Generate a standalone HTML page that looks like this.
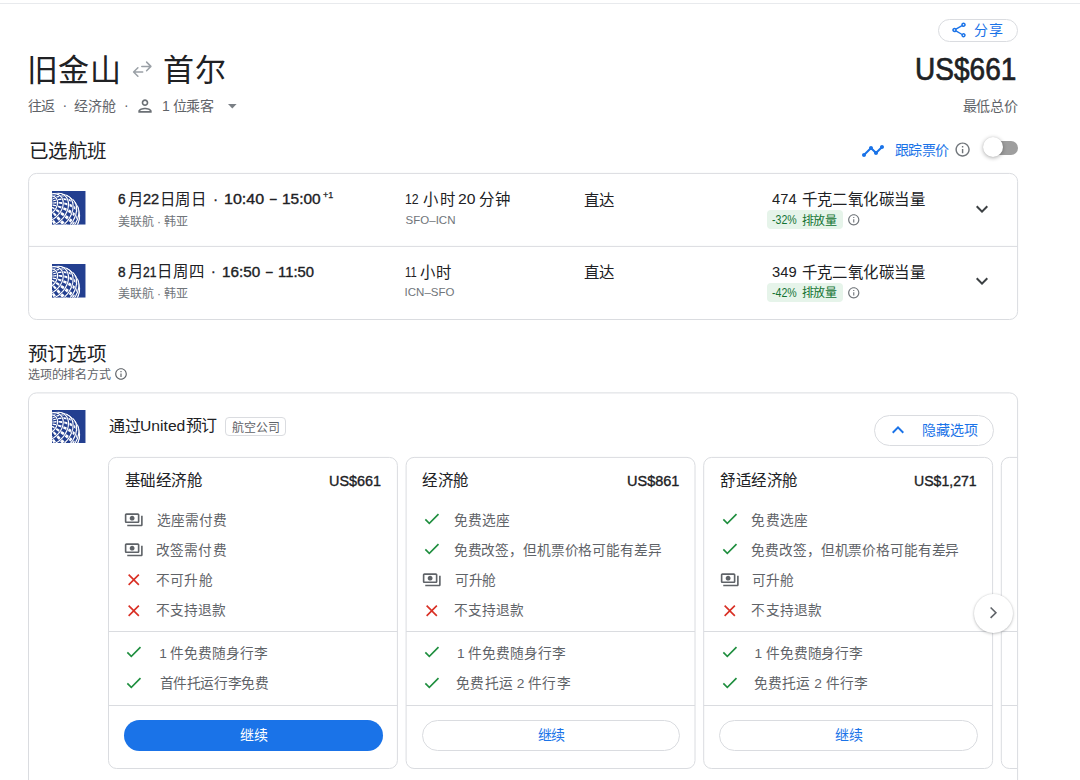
<!DOCTYPE html>
<html lang="zh-CN">
<head>
<meta charset="utf-8">
<title>Flights</title>
<style>
html,body{margin:0;padding:0;background:#fff;}
body{width:1080px;height:780px;position:relative;overflow:hidden;font-family:"Liberation Sans",sans-serif;color:#202124;}
.a{position:absolute;white-space:nowrap;line-height:1;}
svg{position:absolute;display:block;overflow:visible;}
.bx{position:absolute;box-sizing:border-box;}
.card{position:absolute;box-sizing:border-box;border:1px solid #dadce0;border-radius:8px;background:#fff;}
.hr{position:absolute;height:1px;background:#dadce0;}
</style>
</head>
<body>
<svg width="0" height="0" style="left:0;top:0"><defs><clipPath id="ucl"><circle cx="5.2" cy="24.9" r="23.3"/></clipPath><clipPath id="usq"><rect width="34" height="34"/></clipPath></defs></svg>
<div class="a" style="left:0;top:3px;width:1080px;height:1px;background:#e8eaed;"></div>
<div class="bx" style="left:938px;top:19px;width:80px;height:23px;border:1px solid #dadce0;border-radius:12px;"></div>
<svg style="left:950px;top:21px" width="18" height="18" viewBox="0 0 24 24"><path fill="#1a73e8" d="M18 16.080c-.760 0-1.440.3-1.960.770L8.910 12.700c.050-.230.090-.460.090-.7s-.040-.470-.090-.7l7.050-4.110c.540.5 1.250.810 2.040.810 1.660 0 3-1.340 3-3s-1.340-3-3-3-3 1.340-3 3c0 .240.040.470.090.7L8.040 9.810C7.500 9.310 6.790 9 6 9c-1.660 0-3 1.340-3 3s1.340 3 3 3c.790 0 1.500-.310 2.040-.810l7.120 4.160c-.050.210-.080.430-.080.650 0 1.610 1.310 2.920 2.920 2.920s2.920-1.310 2.920-2.920-1.310-2.920-2.920-2.920zM18 4c.550 0 1 .450 1 1s-.450 1-1 1-1-.450-1-1 .450-1 1-1zM6 13c-.550 0-1-.450-1-1s.450-1 1-1 1 .450 1 1-.450 1-1 1zm12 7.020c-.550 0-1-.450-1-1s.450-1 1-1 1 .450 1 1-.450 1-1 1z"/></svg>
<svg style="left:131px;top:59px" width="22" height="20" viewBox="0 0 22 20"><g fill="none" stroke="#9aa0a6" stroke-width="1.500" stroke-linecap="round" stroke-linejoin="round"><path d="M10.800 7.400H19.800M15.600 3.100l4.300 4.300-4.300 4.300"/><path d="M11.700 13H2.700M6.900 8.700l-4.300 4.300 4.300 4.300"/></g></svg>
<svg style="left:134.600px;top:96.100px" width="20" height="20" viewBox="0 0 24 24"><path fill="#6b7075" d="M12 6c1.100 0 2 .9 2 2s-.9 2-2 2-2-.9-2-2 .9-2 2-2m0 10c2.700 0 5.800 1.290 6 2H6c.230-.720 3.310-2 6-2m0-12C9.790 4 8 5.790 8 8s1.790 4 4 4 4-1.790 4-4-1.790-4-4-4zm0 10c-2.670 0-8 1.340-8 4v2h16v-2c0-2.660-5.330-4-8-4z"/></svg>
<svg style="left:227.500px;top:104px" width="9" height="5" viewBox="0 0 9 5"><path fill="#7a7f85" d="M0 0h8.600L4.300 4.500z"/></svg>
<svg style="left:861.300px;top:138.500px" width="24" height="24" viewBox="0 0 24 24"><path fill="#1a73e8" d="M23 8c0 1.100-.9 2-2 2-.180 0-.350-.020-.510-.070l-3.560 3.550c.050.160.070.340.070.520 0 1.100-.9 2-2 2s-2-.9-2-2c0-.180.020-.360.070-.520l-2.550-2.550c-.160.050-.340.070-.520.070s-.360-.020-.520-.070l-4.550 4.560c.050.160.070.330.070.510 0 1.100-.9 2-2 2s-2-.9-2-2 .9-2 2-2c.180 0 .350.020.510.070l4.560-4.550C8.020 9.360 8 9.180 8 9c0-1.100.9-2 2-2s2 .9 2 2c0 .180-.020.360-.070.520l2.550 2.550c.160-.050.340-.070.520-.070s.360.020.520.070l3.550-3.560C19.020 8.350 19 8.180 19 8c0-1.100.9-2 2-2s2 .9 2 2z"/></svg>
<svg style="left:953.7px;top:141.4px" width="17.2" height="17.2" viewBox="0 0 24 24"><path fill="#70757a" d="M11 7h2v2h-2zm0 4h2v6h-2zm1-9C6.480 2 2 6.480 2 12s4.480 10 10 10 10-4.480 10-10S17.520 2 12 2zm0 18c-4.410 0-8-3.590-8-8s3.590-8 8-8 8 3.590 8 8-3.590 8-8 8z"/></svg>
<div class="bx" style="left:985px;top:141px;width:33px;height:13.500px;border-radius:7px;background:#9e9e9e;"></div>
<div class="bx" style="left:982.500px;top:137.100px;width:20.400px;height:20.400px;border-radius:10.200px;background:#fff;box-shadow:0 1px 4px rgba(0,0,0,.32),0 0 1px rgba(0,0,0,.12);"></div>
<svg style="left:0;top:0" width="1080" height="780" viewBox="0 0 1080 780"><defs><clipPath id="fclip"><rect x="0" y="0" width="1017.100" height="780"/></clipPath></defs><g fill="none" stroke="#dadce0" stroke-width="1"><rect x="28.600" y="173.400" width="989" height="146.100" rx="8"/><path d="M28.600 246.400H1017.600"/><rect x="28.500" y="392.900" width="989.100" height="430" rx="8"/><g clip-path="url(#fclip)"><rect x="108.5" y="457.400" width="288.900" height="311.100" rx="8"/><path d="M108.5 631.500h288.900M108.5 705.500h288.900"/><rect x="406.1" y="457.400" width="288.900" height="311.100" rx="8"/><path d="M406.1 631.500h288.900M406.1 705.500h288.900"/><rect x="703.7" y="457.400" width="288.900" height="311.100" rx="8"/><path d="M703.7 631.500h288.900M703.7 705.500h288.900"/><rect x="1001.3" y="457.400" width="288.900" height="311.100" rx="8"/><path d="M1001.3 631.500h288.900M1001.3 705.500h288.900"/></g></g></svg>
<svg style="left:52.3px;top:191.3px;overflow:hidden" width="33.700" height="33.700" viewBox="0 0 34 34"><g clip-path="url(#usq)"><rect width="34" height="34" fill="#233f90"/><g clip-path="url(#ucl)"><path fill="#fff" d="M1.6 2.3L1.0 2.4L0.5 2.6L-0.1 2.8L-0.6 3.1L-1.1 3.5L-1.6 3.8L-2.1 4.3L-2.5 4.8L-3.0 5.3L-3.4 5.9L-3.8 6.5L-4.2 7.2L-3.2 7.1L-2.7 6.4L-2.1 5.8L-1.6 5.2L-1.0 4.7L-0.4 4.2L0.2 3.7L0.8 3.3L1.4 3.0L2.0 2.7L2.6 2.4L3.3 2.2L3.9 2.1ZM9.5 2.4L8.8 2.3L8.1 2.3L7.3 2.3L6.6 2.4L5.9 2.5L5.1 2.7L4.4 2.9L3.6 3.2L2.9 3.5L2.2 3.9L1.4 4.3L0.7 4.8L0.0 5.4L-0.7 5.9L-1.3 6.6L-2.0 7.2L-2.6 8.0L-3.3 8.7L-3.9 9.5L-3.3 9.7L-2.6 8.9L-1.9 8.2L-1.1 7.5L-0.3 6.9L0.4 6.3L1.2 5.7L2.0 5.2L2.9 4.8L3.7 4.4L4.5 4.0L5.3 3.7L6.1 3.4L7.0 3.2L7.8 3.1L8.6 3.0L9.4 2.9L10.2 2.9L11.0 3.0L11.7 3.1ZM18.5 6.3L17.9 5.9L17.2 5.5L16.5 5.2L15.7 4.9L14.9 4.6L14.1 4.4L13.3 4.3L12.5 4.2L11.6 4.2L10.7 4.2L9.8 4.2L8.9 4.3L8.0 4.5L7.1 4.7L6.2 4.9L5.3 5.3L4.4 5.6L3.4 6.0L2.5 6.4L1.6 6.9L0.7 7.5L-0.2 8.0L-1.1 8.6L-1.9 9.3L-2.8 10.0L-3.6 10.7L-3.3 11.0L-2.4 10.3L-1.5 9.7L-0.5 9.2L0.4 8.6L1.4 8.1L2.4 7.7L3.4 7.2L4.4 6.9L5.4 6.5L6.4 6.3L7.4 6.0L8.3 5.8L9.3 5.7L10.3 5.6L11.2 5.5L12.2 5.5L13.1 5.5L14.0 5.6L14.9 5.7L15.8 5.9L16.6 6.1L17.4 6.4L18.2 6.7L18.9 7.1L19.6 7.5L20.3 7.9ZM25.6 14.5L25.2 13.8L24.8 13.2L24.3 12.5L23.8 11.9L23.2 11.4L22.6 10.9L22.0 10.4L21.3 9.9L20.5 9.5L19.8 9.1L19.0 8.8L18.1 8.4L17.3 8.2L16.4 7.9L15.5 7.8L14.5 7.6L13.5 7.5L12.6 7.4L11.5 7.4L10.5 7.4L9.5 7.5L8.4 7.6L7.4 7.8L6.3 8.0L5.3 8.2L4.2 8.5L3.1 8.8L2.1 9.1L1.0 9.5L0.0 9.9L-1.0 10.4L-2.0 10.9L-3.0 11.4L-4.0 12.0L-3.9 12.2L-2.9 11.8L-1.8 11.4L-0.8 11.0L0.3 10.6L1.4 10.3L2.5 10.1L3.6 9.8L4.7 9.6L5.8 9.4L6.9 9.3L7.9 9.2L9.0 9.1L10.1 9.1L11.2 9.1L12.2 9.2L13.3 9.3L14.3 9.4L15.3 9.6L16.3 9.8L17.2 10.0L18.1 10.3L19.0 10.6L19.8 11.0L20.7 11.4L21.4 11.8L22.2 12.2L22.9 12.7L23.5 13.2L24.1 13.7L24.7 14.3L25.2 14.9L25.7 15.5L26.1 16.1L26.5 16.8ZM28.0 23.2L27.9 22.5L27.8 21.8L27.6 21.2L27.3 20.5L27.0 19.9L26.6 19.3L26.2 18.7L25.8 18.1L25.2 17.5L24.7 16.9L24.1 16.4L23.4 15.9L22.7 15.4L22.0 14.9L21.2 14.4L20.4 14.0L19.5 13.6L18.6 13.2L17.7 12.9L16.7 12.6L15.7 12.3L14.7 12.0L13.7 11.8L12.6 11.6L11.6 11.4L10.5 11.3L9.4 11.2L8.3 11.2L7.2 11.1L6.0 11.1L4.9 11.2L3.8 11.2L2.7 11.3L1.6 11.5L0.5 11.6L-0.6 11.8L-1.7 12.1L-2.8 12.3L-3.8 12.6L-3.8 13.0L-2.8 12.8L-1.7 12.7L-0.7 12.6L0.4 12.5L1.5 12.5L2.7 12.5L3.8 12.5L4.9 12.5L6.0 12.6L7.1 12.7L8.2 12.9L9.3 13.0L10.4 13.2L11.5 13.5L12.6 13.7L13.6 14.0L14.7 14.3L15.7 14.6L16.7 15.0L17.6 15.4L18.6 15.8L19.4 16.2L20.3 16.7L21.1 17.1L21.9 17.6L22.7 18.1L23.4 18.6L24.0 19.2L24.6 19.7L25.2 20.3L25.7 20.9L26.2 21.4L26.6 22.0L27.0 22.6L27.3 23.2L27.5 23.8L27.7 24.4L27.9 25.1L28.0 25.7ZM27.3 30.9L27.4 30.4L27.5 29.9L27.5 29.4L27.4 28.9L27.3 28.3L27.1 27.8L26.9 27.2L26.6 26.7L26.3 26.1L25.9 25.5L25.5 25.0L25.0 24.4L24.5 23.9L24.0 23.3L23.4 22.7L22.7 22.2L22.0 21.6L21.3 21.1L20.5 20.6L19.7 20.0L18.8 19.5L17.9 19.0L17.0 18.6L16.1 18.1L15.1 17.7L14.1 17.2L13.1 16.8L12.1 16.4L11.1 16.0L10.0 15.7L8.9 15.4L7.8 15.1L6.7 14.8L5.7 14.5L4.6 14.3L3.5 14.1L2.4 13.9L1.3 13.7L0.2 13.6L-0.8 13.5L-1.9 13.4L-2.9 13.4L-3.9 13.4L-4.0 13.7L-3.1 13.9L-2.1 14.1L-1.1 14.3L-0.1 14.5L0.9 14.8L2.0 15.1L3.0 15.4L4.1 15.7L5.1 16.1L6.2 16.5L7.2 16.9L8.3 17.3L9.3 17.7L10.3 18.2L11.3 18.6L12.3 19.1L13.3 19.6L14.3 20.1L15.2 20.7L16.1 21.2L17.0 21.7L17.9 22.3L18.7 22.9L19.5 23.4L20.3 24.0L21.0 24.5L21.7 25.1L22.3 25.7L23.0 26.2L23.5 26.8L24.0 27.4L24.5 27.9L24.9 28.5L25.3 29.0L25.7 29.5L25.9 30.0L26.2 30.5L26.4 31.0L26.5 31.5L26.6 32.0L26.6 32.4L26.6 32.8L26.5 33.2ZM25.0 36.3L25.1 36.0L25.1 35.7L25.1 35.4L25.0 35.1L24.9 34.7L24.7 34.3L24.5 33.9L24.2 33.4L23.9 33.0L23.6 32.5L23.2 32.0L22.7 31.4L22.3 30.9L21.7 30.4L21.2 29.8L20.6 29.2L19.9 28.6L19.3 28.0L18.5 27.4L17.8 26.8L17.0 26.2L16.2 25.6L15.4 25.0L14.5 24.4L13.7 23.8L12.8 23.1L11.9 22.5L10.9 21.9L10.0 21.3L9.0 20.7L8.1 20.2L7.1 19.6L6.1 19.0L5.2 18.5L4.2 18.0L3.2 17.5L2.2 17.0L1.3 16.5L0.3 16.1L-0.6 15.6L-1.6 15.2L-2.5 14.8L-3.4 14.5L-3.7 15.0L-2.9 15.4L-2.0 16.0L-1.2 16.5L-0.4 17.1L0.5 17.6L1.4 18.2L2.3 18.8L3.2 19.5L4.1 20.1L5.0 20.8L5.9 21.4L6.8 22.1L7.7 22.8L8.6 23.4L9.5 24.1L10.3 24.8L11.2 25.5L12.1 26.2L12.9 26.9L13.7 27.5L14.5 28.2L15.3 28.9L16.0 29.5L16.7 30.2L17.4 30.8L18.1 31.4L18.7 32.0L19.3 32.6L19.9 33.1L20.4 33.7L20.9 34.2L21.4 34.7L21.8 35.2L22.1 35.6L22.5 36.1L22.8 36.5L23.0 36.8L23.2 37.2L23.4 37.5L23.5 37.8L23.6 38.0L23.6 38.2L23.6 38.4ZM18.2 37.4L17.7 36.8L17.2 36.3L16.6 35.7L16.0 35.2L15.4 34.5L14.8 33.9L14.1 33.2L13.4 32.6L12.7 31.9L12.0 31.1L11.2 30.4L10.5 29.7L9.7 28.9L8.9 28.2L8.1 27.4L7.3 26.6L6.5 25.8L5.7 25.0L4.9 24.2L4.1 23.5L3.3 22.7L2.5 21.9L1.7 21.1L1.0 20.4L0.2 19.6L-0.6 18.9L-1.3 18.2L-2.0 17.5L-2.8 16.8L-3.5 16.1L-4.0 16.6L-3.4 17.4L-2.8 18.2L-2.2 19.0L-1.6 19.8L-0.9 20.7L-0.3 21.5L0.4 22.4L1.1 23.2L1.8 24.1L2.5 25.0L3.2 25.8L3.9 26.7L4.7 27.6L5.4 28.4L6.1 29.3L6.8 30.1L7.5 30.9L8.2 31.7L8.9 32.5L9.6 33.3L10.3 34.1L11.0 34.8L11.6 35.5L12.3 36.2L12.9 36.8L13.5 37.5L14.1 38.1L14.7 38.6L15.2 39.2L15.7 39.6ZM7.8 37.1L7.2 36.3L6.5 35.6L5.9 34.7L5.3 33.9L4.6 33.0L4.0 32.1L3.4 31.2L2.8 30.3L2.1 29.4L1.5 28.4L0.9 27.5L0.3 26.5L-0.2 25.6L-0.8 24.6L-1.4 23.7L-1.9 22.7L-2.4 21.7L-2.9 20.8L-3.4 19.9L-4.4 20.4L-4.1 21.4L-3.7 22.5L-3.3 23.5L-2.9 24.5L-2.5 25.5L-2.0 26.6L-1.5 27.6L-1.1 28.6L-0.6 29.6L-0.0 30.6L0.5 31.6L1.0 32.5L1.6 33.5L2.1 34.4L2.7 35.3L3.3 36.2L3.8 37.0L4.4 37.9L5.0 38.6ZM-0.0 37.5L-0.5 36.6L-1.0 35.6L-1.5 34.7L-1.9 33.7L-2.3 32.7L-2.8 31.7L-3.2 30.6L-5.3 31.1L-5.0 32.2L-4.7 33.2L-4.3 34.2L-3.9 35.2L-3.6 36.2L-3.1 37.2L-2.7 38.1Z"/><path fill="none" stroke="#233f90" stroke-width="2.2" d="M28.1 23.8L28.1 24.7L28.0 25.5L28.0 26.4L27.8 27.3L27.7 28.2L27.4 29.1L27.2 30.1L26.8 31.0L26.5 31.9L26.1 32.8L25.6 33.7L25.1 34.6L24.6 35.5L24.0 36.3M26.0 15.2L26.3 16.0L26.6 16.9L26.8 17.7L27.0 18.6L27.1 19.5L27.1 20.4L27.2 21.4L27.1 22.3L27.0 23.3L26.9 24.3L26.7 25.3L26.4 26.3L26.1 27.3L25.8 28.3L25.4 29.3L24.9 30.3L24.4 31.3L23.9 32.3L23.3 33.3L22.7 34.3L22.0 35.2L21.3 36.1M21.2 8.5L21.8 9.1L22.3 9.8L22.8 10.5L23.2 11.2L23.6 12.0L23.9 12.8L24.2 13.7L24.4 14.6L24.6 15.5L24.7 16.4L24.8 17.4L24.8 18.3L24.8 19.3L24.7 20.3L24.5 21.3L24.3 22.4L24.1 23.4L23.8 24.4L23.4 25.5L23.0 26.5L22.6 27.6L22.0 28.6L21.5 29.6L20.9 30.6L20.2 31.6L19.6 32.5L18.8 33.5L18.1 34.4L17.3 35.3L16.4 36.1M14.4 3.9L15.1 4.3L15.8 4.7L16.5 5.2L17.1 5.7L17.7 6.2L18.3 6.8L18.8 7.5L19.3 8.2L19.7 8.9L20.1 9.6L20.4 10.4L20.7 11.2L20.9 12.1L21.1 12.9L21.2 13.8L21.2 14.8L21.2 15.7L21.2 16.7L21.1 17.6L21.0 18.6L20.8 19.6L20.5 20.6L20.2 21.6L19.9 22.6L19.5 23.6L19.1 24.6L18.6 25.6L18.0 26.5L17.5 27.5L16.8 28.5L16.2 29.4L15.5 30.3L14.7 31.2L14.0 32.0L13.2 32.9L12.3 33.7L11.5 34.4L10.6 35.2L9.7 35.9L8.8 36.5M5.8 2.0L6.7 2.1L7.5 2.2L8.3 2.3L9.0 2.5L9.7 2.8L10.5 3.1L11.1 3.4L11.8 3.8L12.4 4.2L13.0 4.7L13.5 5.2L14.0 5.7L14.5 6.3L14.9 6.9L15.3 7.5L15.6 8.2L15.9 8.9L16.1 9.6L16.3 10.4L16.5 11.2L16.6 12.0L16.6 12.8L16.6 13.7L16.6 14.5L16.5 15.4L16.4 16.3L16.2 17.2L16.0 18.1L15.7 19.0L15.4 19.9L15.1 20.8L14.7 21.6L14.2 22.5L13.8 23.4L13.2 24.3L12.7 25.1L12.1 26.0L11.5 26.8L10.8 27.6L10.1 28.3L9.4 29.1L8.6 29.8L7.9 30.5L7.1 31.2L6.3 31.8L5.4 32.4L4.6 32.9L3.7 33.5L2.8 33.9L1.9 34.4L1.1 34.8L0.2 35.1L-0.7 35.4L-1.6 35.7L-2.5 35.9M-2.6 3.5L-1.9 3.3L-1.2 3.1L-0.4 2.9L0.3 2.8L1.0 2.8L1.7 2.7L2.4 2.7L3.1 2.8L3.8 2.9L4.4 3.0L5.0 3.2L5.6 3.4L6.2 3.6L6.8 3.9L7.3 4.2L7.8 4.5L8.3 4.9L8.7 5.3L9.1 5.8L9.5 6.2L9.9 6.7L10.2 7.3L10.4 7.8L10.7 8.4L10.9 9.0L11.0 9.6L11.2 10.3L11.3 11.0L11.3 11.6L11.3 12.3L11.3 13.0L11.2 13.8L11.1 14.5L11.0 15.2L10.8 16.0L10.6 16.7L10.3 17.4L10.0 18.2L9.7 18.9L9.3 19.6L8.9 20.4L8.5 21.1L8.1 21.8L7.6 22.5L7.0 23.1L6.5 23.8L5.9 24.4L5.3 25.0L4.7 25.6L4.1 26.2L3.4 26.7L2.8 27.3L2.1 27.8L1.4 28.2L0.7 28.6L-0.1 29.0L-0.8 29.4L-1.5 29.7L-2.3 30.0M-2.4 4.9L-1.8 4.9L-1.3 4.9L-0.8 4.9L-0.3 4.9L0.1 5.0L0.6 5.1L1.1 5.2L1.5 5.3L1.9 5.5L2.3 5.7L2.7 5.9L3.1 6.2L3.4 6.4L3.7 6.7L4.0 7.1L4.3 7.4L4.5 7.8L4.8 8.2L5.0 8.6L5.1 9.0L5.3 9.4L5.4 9.9L5.5 10.3L5.6 10.8L5.6 11.3L5.6 11.8L5.6 12.3L5.5 12.8L5.5 13.4L5.3 13.9L5.2 14.4L5.1 15.0L4.9 15.5L4.7 16.0L4.4 16.6L4.2 17.1L3.9 17.6L3.6 18.1L3.2 18.6L2.9 19.1L2.5 19.6L2.1 20.1L1.7 20.5L1.3 21.0L0.8 21.4L0.4 21.8L-0.1 22.2L-0.6 22.6L-1.1 22.9L-1.6 23.3L-2.1 23.6M-2.2 8.6L-2.0 8.7L-1.7 8.9L-1.5 9.0L-1.4 9.2L-1.2 9.3L-1.0 9.5L-0.9 9.7L-0.7 9.9L-0.6 10.1L-0.5 10.3L-0.4 10.6L-0.3 10.8L-0.3 11.0L-0.2 11.3L-0.2 11.6L-0.2 11.8L-0.1 12.1L-0.2 12.4L-0.2 12.7L-0.2 13.0L-0.3 13.3L-0.4 13.6L-0.4 13.8L-0.5 14.1L-0.7 14.4L-0.8 14.7L-0.9 15.0L-1.1 15.3L-1.3 15.6L-1.4 15.9L-1.6 16.1L-1.8 16.4L-2.1 16.7"/><path fill="none" stroke="#fff" stroke-width="1.2" d="M28.1 23.8L28.1 24.7L28.0 25.5L28.0 26.4L27.8 27.3L27.7 28.2L27.4 29.1L27.2 30.1L26.8 31.0L26.5 31.9L26.1 32.8L25.6 33.7L25.1 34.6L24.6 35.5L24.0 36.3M26.0 15.2L26.3 16.0L26.6 16.9L26.8 17.7L27.0 18.6L27.1 19.5L27.1 20.4L27.2 21.4L27.1 22.3L27.0 23.3L26.9 24.3L26.7 25.3L26.4 26.3L26.1 27.3L25.8 28.3L25.4 29.3L24.9 30.3L24.4 31.3L23.9 32.3L23.3 33.3L22.7 34.3L22.0 35.2L21.3 36.1M21.2 8.5L21.8 9.1L22.3 9.8L22.8 10.5L23.2 11.2L23.6 12.0L23.9 12.8L24.2 13.7L24.4 14.6L24.6 15.5L24.7 16.4L24.8 17.4L24.8 18.3L24.8 19.3L24.7 20.3L24.5 21.3L24.3 22.4L24.1 23.4L23.8 24.4L23.4 25.5L23.0 26.5L22.6 27.6L22.0 28.6L21.5 29.6L20.9 30.6L20.2 31.6L19.6 32.5L18.8 33.5L18.1 34.4L17.3 35.3L16.4 36.1M14.4 3.9L15.1 4.3L15.8 4.7L16.5 5.2L17.1 5.7L17.7 6.2L18.3 6.8L18.8 7.5L19.3 8.2L19.7 8.9L20.1 9.6L20.4 10.4L20.7 11.2L20.9 12.1L21.1 12.9L21.2 13.8L21.2 14.8L21.2 15.7L21.2 16.7L21.1 17.6L21.0 18.6L20.8 19.6L20.5 20.6L20.2 21.6L19.9 22.6L19.5 23.6L19.1 24.6L18.6 25.6L18.0 26.5L17.5 27.5L16.8 28.5L16.2 29.4L15.5 30.3L14.7 31.2L14.0 32.0L13.2 32.9L12.3 33.7L11.5 34.4L10.6 35.2L9.7 35.9L8.8 36.5M5.8 2.0L6.7 2.1L7.5 2.2L8.3 2.3L9.0 2.5L9.7 2.8L10.5 3.1L11.1 3.4L11.8 3.8L12.4 4.2L13.0 4.7L13.5 5.2L14.0 5.7L14.5 6.3L14.9 6.9L15.3 7.5L15.6 8.2L15.9 8.9L16.1 9.6L16.3 10.4L16.5 11.2L16.6 12.0L16.6 12.8L16.6 13.7L16.6 14.5L16.5 15.4L16.4 16.3L16.2 17.2L16.0 18.1L15.7 19.0L15.4 19.9L15.1 20.8L14.7 21.6L14.2 22.5L13.8 23.4L13.2 24.3L12.7 25.1L12.1 26.0L11.5 26.8L10.8 27.6L10.1 28.3L9.4 29.1L8.6 29.8L7.9 30.5L7.1 31.2L6.3 31.8L5.4 32.4L4.6 32.9L3.7 33.5L2.8 33.9L1.9 34.4L1.1 34.8L0.2 35.1L-0.7 35.4L-1.6 35.7L-2.5 35.9M-2.6 3.5L-1.9 3.3L-1.2 3.1L-0.4 2.9L0.3 2.8L1.0 2.8L1.7 2.7L2.4 2.7L3.1 2.8L3.8 2.9L4.4 3.0L5.0 3.2L5.6 3.4L6.2 3.6L6.8 3.9L7.3 4.2L7.8 4.5L8.3 4.9L8.7 5.3L9.1 5.8L9.5 6.2L9.9 6.7L10.2 7.3L10.4 7.8L10.7 8.4L10.9 9.0L11.0 9.6L11.2 10.3L11.3 11.0L11.3 11.6L11.3 12.3L11.3 13.0L11.2 13.8L11.1 14.5L11.0 15.2L10.8 16.0L10.6 16.7L10.3 17.4L10.0 18.2L9.7 18.9L9.3 19.6L8.9 20.4L8.5 21.1L8.1 21.8L7.6 22.5L7.0 23.1L6.5 23.8L5.9 24.4L5.3 25.0L4.7 25.6L4.1 26.2L3.4 26.7L2.8 27.3L2.1 27.8L1.4 28.2L0.7 28.6L-0.1 29.0L-0.8 29.4L-1.5 29.7L-2.3 30.0M-2.4 4.9L-1.8 4.9L-1.3 4.9L-0.8 4.9L-0.3 4.9L0.1 5.0L0.6 5.1L1.1 5.2L1.5 5.3L1.9 5.5L2.3 5.7L2.7 5.9L3.1 6.2L3.4 6.4L3.7 6.7L4.0 7.1L4.3 7.4L4.5 7.8L4.8 8.2L5.0 8.6L5.1 9.0L5.3 9.4L5.4 9.9L5.5 10.3L5.6 10.8L5.6 11.3L5.6 11.8L5.6 12.3L5.5 12.8L5.5 13.4L5.3 13.9L5.2 14.4L5.1 15.0L4.9 15.5L4.7 16.0L4.4 16.6L4.2 17.1L3.9 17.6L3.6 18.1L3.2 18.6L2.9 19.1L2.5 19.6L2.1 20.1L1.7 20.5L1.3 21.0L0.8 21.4L0.4 21.8L-0.1 22.2L-0.6 22.6L-1.1 22.9L-1.6 23.3L-2.1 23.6M-2.2 8.6L-2.0 8.7L-1.7 8.9L-1.5 9.0L-1.4 9.2L-1.2 9.3L-1.0 9.5L-0.9 9.7L-0.7 9.9L-0.6 10.1L-0.5 10.3L-0.4 10.6L-0.3 10.8L-0.3 11.0L-0.2 11.3L-0.2 11.6L-0.2 11.8L-0.1 12.1L-0.2 12.4L-0.2 12.7L-0.2 13.0L-0.3 13.3L-0.4 13.6L-0.4 13.8L-0.5 14.1L-0.7 14.4L-0.8 14.7L-0.9 15.0L-1.1 15.3L-1.3 15.6L-1.4 15.9L-1.6 16.1L-1.8 16.4L-2.1 16.7"/><circle cx="5.2" cy="24.9" r="22.700" fill="none" stroke="#fff" stroke-width=".8"/></g></g></svg>
<div class="bx" style="left:766.500px;top:210.4px;width:76.400px;height:18.600px;border-radius:4px;background:#e6f4ea;"></div>
<svg style="left:847.2px;top:213.1px" width="13.5" height="13.5" viewBox="0 0 24 24"><path fill="#70757a" d="M11 7h2v2h-2zm0 4h2v6h-2zm1-9C6.480 2 2 6.480 2 12s4.480 10 10 10 10-4.480 10-10S17.520 2 12 2zm0 18c-4.410 0-8-3.590-8-8s3.590-8 8-8 8 3.590 8 8-3.590 8-8 8z"/></svg>
<svg style="left:970.3px;top:196.6px" width="24" height="24" viewBox="0 0 24 24"><path fill="#3c4043" d="M16.590 8.590L12 13.170 7.410 8.590 6 10l6 6 6-6z"/></svg>
<svg style="left:52.3px;top:263.9px;overflow:hidden" width="33.700" height="33.700" viewBox="0 0 34 34"><g clip-path="url(#usq)"><rect width="34" height="34" fill="#233f90"/><g clip-path="url(#ucl)"><path fill="#fff" d="M1.6 2.3L1.0 2.4L0.5 2.6L-0.1 2.8L-0.6 3.1L-1.1 3.5L-1.6 3.8L-2.1 4.3L-2.5 4.8L-3.0 5.3L-3.4 5.9L-3.8 6.5L-4.2 7.2L-3.2 7.1L-2.7 6.4L-2.1 5.8L-1.6 5.2L-1.0 4.7L-0.4 4.2L0.2 3.7L0.8 3.3L1.4 3.0L2.0 2.7L2.6 2.4L3.3 2.2L3.9 2.1ZM9.5 2.4L8.8 2.3L8.1 2.3L7.3 2.3L6.6 2.4L5.9 2.5L5.1 2.7L4.4 2.9L3.6 3.2L2.9 3.5L2.2 3.9L1.4 4.3L0.7 4.8L0.0 5.4L-0.7 5.9L-1.3 6.6L-2.0 7.2L-2.6 8.0L-3.3 8.7L-3.9 9.5L-3.3 9.7L-2.6 8.9L-1.9 8.2L-1.1 7.5L-0.3 6.9L0.4 6.3L1.2 5.7L2.0 5.2L2.9 4.8L3.7 4.4L4.5 4.0L5.3 3.7L6.1 3.4L7.0 3.2L7.8 3.1L8.6 3.0L9.4 2.9L10.2 2.9L11.0 3.0L11.7 3.1ZM18.5 6.3L17.9 5.9L17.2 5.5L16.5 5.2L15.7 4.9L14.9 4.6L14.1 4.4L13.3 4.3L12.5 4.2L11.6 4.2L10.7 4.2L9.8 4.2L8.9 4.3L8.0 4.5L7.1 4.7L6.2 4.9L5.3 5.3L4.4 5.6L3.4 6.0L2.5 6.4L1.6 6.9L0.7 7.5L-0.2 8.0L-1.1 8.6L-1.9 9.3L-2.8 10.0L-3.6 10.7L-3.3 11.0L-2.4 10.3L-1.5 9.7L-0.5 9.2L0.4 8.6L1.4 8.1L2.4 7.7L3.4 7.2L4.4 6.9L5.4 6.5L6.4 6.3L7.4 6.0L8.3 5.8L9.3 5.7L10.3 5.6L11.2 5.5L12.2 5.5L13.1 5.5L14.0 5.6L14.9 5.7L15.8 5.9L16.6 6.1L17.4 6.4L18.2 6.7L18.9 7.1L19.6 7.5L20.3 7.9ZM25.6 14.5L25.2 13.8L24.8 13.2L24.3 12.5L23.8 11.9L23.2 11.4L22.6 10.9L22.0 10.4L21.3 9.9L20.5 9.5L19.8 9.1L19.0 8.8L18.1 8.4L17.3 8.2L16.4 7.9L15.5 7.8L14.5 7.6L13.5 7.5L12.6 7.4L11.5 7.4L10.5 7.4L9.5 7.5L8.4 7.6L7.4 7.8L6.3 8.0L5.3 8.2L4.2 8.5L3.1 8.8L2.1 9.1L1.0 9.5L0.0 9.9L-1.0 10.4L-2.0 10.9L-3.0 11.4L-4.0 12.0L-3.9 12.2L-2.9 11.8L-1.8 11.4L-0.8 11.0L0.3 10.6L1.4 10.3L2.5 10.1L3.6 9.8L4.7 9.6L5.8 9.4L6.9 9.3L7.9 9.2L9.0 9.1L10.1 9.1L11.2 9.1L12.2 9.2L13.3 9.3L14.3 9.4L15.3 9.6L16.3 9.8L17.2 10.0L18.1 10.3L19.0 10.6L19.8 11.0L20.7 11.4L21.4 11.8L22.2 12.2L22.9 12.7L23.5 13.2L24.1 13.7L24.7 14.3L25.2 14.9L25.7 15.5L26.1 16.1L26.5 16.8ZM28.0 23.2L27.9 22.5L27.8 21.8L27.6 21.2L27.3 20.5L27.0 19.9L26.6 19.3L26.2 18.7L25.8 18.1L25.2 17.5L24.7 16.9L24.1 16.4L23.4 15.9L22.7 15.4L22.0 14.9L21.2 14.4L20.4 14.0L19.5 13.6L18.6 13.2L17.7 12.9L16.7 12.6L15.7 12.3L14.7 12.0L13.7 11.8L12.6 11.6L11.6 11.4L10.5 11.3L9.4 11.2L8.3 11.2L7.2 11.1L6.0 11.1L4.9 11.2L3.8 11.2L2.7 11.3L1.6 11.5L0.5 11.6L-0.6 11.8L-1.7 12.1L-2.8 12.3L-3.8 12.6L-3.8 13.0L-2.8 12.8L-1.7 12.7L-0.7 12.6L0.4 12.5L1.5 12.5L2.7 12.5L3.8 12.5L4.9 12.5L6.0 12.6L7.1 12.7L8.2 12.9L9.3 13.0L10.4 13.2L11.5 13.5L12.6 13.7L13.6 14.0L14.7 14.3L15.7 14.6L16.7 15.0L17.6 15.4L18.6 15.8L19.4 16.2L20.3 16.7L21.1 17.1L21.9 17.6L22.7 18.1L23.4 18.6L24.0 19.2L24.6 19.7L25.2 20.3L25.7 20.9L26.2 21.4L26.6 22.0L27.0 22.6L27.3 23.2L27.5 23.8L27.7 24.4L27.9 25.1L28.0 25.7ZM27.3 30.9L27.4 30.4L27.5 29.9L27.5 29.4L27.4 28.9L27.3 28.3L27.1 27.8L26.9 27.2L26.6 26.7L26.3 26.1L25.9 25.5L25.5 25.0L25.0 24.4L24.5 23.9L24.0 23.3L23.4 22.7L22.7 22.2L22.0 21.6L21.3 21.1L20.5 20.6L19.7 20.0L18.8 19.5L17.9 19.0L17.0 18.6L16.1 18.1L15.1 17.7L14.1 17.2L13.1 16.8L12.1 16.4L11.1 16.0L10.0 15.7L8.9 15.4L7.8 15.1L6.7 14.8L5.7 14.5L4.6 14.3L3.5 14.1L2.4 13.9L1.3 13.7L0.2 13.6L-0.8 13.5L-1.9 13.4L-2.9 13.4L-3.9 13.4L-4.0 13.7L-3.1 13.9L-2.1 14.1L-1.1 14.3L-0.1 14.5L0.9 14.8L2.0 15.1L3.0 15.4L4.1 15.7L5.1 16.1L6.2 16.5L7.2 16.9L8.3 17.3L9.3 17.7L10.3 18.2L11.3 18.6L12.3 19.1L13.3 19.6L14.3 20.1L15.2 20.7L16.1 21.2L17.0 21.7L17.9 22.3L18.7 22.9L19.5 23.4L20.3 24.0L21.0 24.5L21.7 25.1L22.3 25.7L23.0 26.2L23.5 26.8L24.0 27.4L24.5 27.9L24.9 28.5L25.3 29.0L25.7 29.5L25.9 30.0L26.2 30.5L26.4 31.0L26.5 31.5L26.6 32.0L26.6 32.4L26.6 32.8L26.5 33.2ZM25.0 36.3L25.1 36.0L25.1 35.7L25.1 35.4L25.0 35.1L24.9 34.7L24.7 34.3L24.5 33.9L24.2 33.4L23.9 33.0L23.6 32.5L23.2 32.0L22.7 31.4L22.3 30.9L21.7 30.4L21.2 29.8L20.6 29.2L19.9 28.6L19.3 28.0L18.5 27.4L17.8 26.8L17.0 26.2L16.2 25.6L15.4 25.0L14.5 24.4L13.7 23.8L12.8 23.1L11.9 22.5L10.9 21.9L10.0 21.3L9.0 20.7L8.1 20.2L7.1 19.6L6.1 19.0L5.2 18.5L4.2 18.0L3.2 17.5L2.2 17.0L1.3 16.5L0.3 16.1L-0.6 15.6L-1.6 15.2L-2.5 14.8L-3.4 14.5L-3.7 15.0L-2.9 15.4L-2.0 16.0L-1.2 16.5L-0.4 17.1L0.5 17.6L1.4 18.2L2.3 18.8L3.2 19.5L4.1 20.1L5.0 20.8L5.9 21.4L6.8 22.1L7.7 22.8L8.6 23.4L9.5 24.1L10.3 24.8L11.2 25.5L12.1 26.2L12.9 26.9L13.7 27.5L14.5 28.2L15.3 28.9L16.0 29.5L16.7 30.2L17.4 30.8L18.1 31.4L18.7 32.0L19.3 32.6L19.9 33.1L20.4 33.7L20.9 34.2L21.4 34.7L21.8 35.2L22.1 35.6L22.5 36.1L22.8 36.5L23.0 36.8L23.2 37.2L23.4 37.5L23.5 37.8L23.6 38.0L23.6 38.2L23.6 38.4ZM18.2 37.4L17.7 36.8L17.2 36.3L16.6 35.7L16.0 35.2L15.4 34.5L14.8 33.9L14.1 33.2L13.4 32.6L12.7 31.9L12.0 31.1L11.2 30.4L10.5 29.7L9.7 28.9L8.9 28.2L8.1 27.4L7.3 26.6L6.5 25.8L5.7 25.0L4.9 24.2L4.1 23.5L3.3 22.7L2.5 21.9L1.7 21.1L1.0 20.4L0.2 19.6L-0.6 18.9L-1.3 18.2L-2.0 17.5L-2.8 16.8L-3.5 16.1L-4.0 16.6L-3.4 17.4L-2.8 18.2L-2.2 19.0L-1.6 19.8L-0.9 20.7L-0.3 21.5L0.4 22.4L1.1 23.2L1.8 24.1L2.5 25.0L3.2 25.8L3.9 26.7L4.7 27.6L5.4 28.4L6.1 29.3L6.8 30.1L7.5 30.9L8.2 31.7L8.9 32.5L9.6 33.3L10.3 34.1L11.0 34.8L11.6 35.5L12.3 36.2L12.9 36.8L13.5 37.5L14.1 38.1L14.7 38.6L15.2 39.2L15.7 39.6ZM7.8 37.1L7.2 36.3L6.5 35.6L5.9 34.7L5.3 33.9L4.6 33.0L4.0 32.1L3.4 31.2L2.8 30.3L2.1 29.4L1.5 28.4L0.9 27.5L0.3 26.5L-0.2 25.6L-0.8 24.6L-1.4 23.7L-1.9 22.7L-2.4 21.7L-2.9 20.8L-3.4 19.9L-4.4 20.4L-4.1 21.4L-3.7 22.5L-3.3 23.5L-2.9 24.5L-2.5 25.5L-2.0 26.6L-1.5 27.6L-1.1 28.6L-0.6 29.6L-0.0 30.6L0.5 31.6L1.0 32.5L1.6 33.5L2.1 34.4L2.7 35.3L3.3 36.2L3.8 37.0L4.4 37.9L5.0 38.6ZM-0.0 37.5L-0.5 36.6L-1.0 35.6L-1.5 34.7L-1.9 33.7L-2.3 32.7L-2.8 31.7L-3.2 30.6L-5.3 31.1L-5.0 32.2L-4.7 33.2L-4.3 34.2L-3.9 35.2L-3.6 36.2L-3.1 37.2L-2.7 38.1Z"/><path fill="none" stroke="#233f90" stroke-width="2.2" d="M28.1 23.8L28.1 24.7L28.0 25.5L28.0 26.4L27.8 27.3L27.7 28.2L27.4 29.1L27.2 30.1L26.8 31.0L26.5 31.9L26.1 32.8L25.6 33.7L25.1 34.6L24.6 35.5L24.0 36.3M26.0 15.2L26.3 16.0L26.6 16.9L26.8 17.7L27.0 18.6L27.1 19.5L27.1 20.4L27.2 21.4L27.1 22.3L27.0 23.3L26.9 24.3L26.7 25.3L26.4 26.3L26.1 27.3L25.8 28.3L25.4 29.3L24.9 30.3L24.4 31.3L23.9 32.3L23.3 33.3L22.7 34.3L22.0 35.2L21.3 36.1M21.2 8.5L21.8 9.1L22.3 9.8L22.8 10.5L23.2 11.2L23.6 12.0L23.9 12.8L24.2 13.7L24.4 14.6L24.6 15.5L24.7 16.4L24.8 17.4L24.8 18.3L24.8 19.3L24.7 20.3L24.5 21.3L24.3 22.4L24.1 23.4L23.8 24.4L23.4 25.5L23.0 26.5L22.6 27.6L22.0 28.6L21.5 29.6L20.9 30.6L20.2 31.6L19.6 32.5L18.8 33.5L18.1 34.4L17.3 35.3L16.4 36.1M14.4 3.9L15.1 4.3L15.8 4.7L16.5 5.2L17.1 5.7L17.7 6.2L18.3 6.8L18.8 7.5L19.3 8.2L19.7 8.9L20.1 9.6L20.4 10.4L20.7 11.2L20.9 12.1L21.1 12.9L21.2 13.8L21.2 14.8L21.2 15.7L21.2 16.7L21.1 17.6L21.0 18.6L20.8 19.6L20.5 20.6L20.2 21.6L19.9 22.6L19.5 23.6L19.1 24.6L18.6 25.6L18.0 26.5L17.5 27.5L16.8 28.5L16.2 29.4L15.5 30.3L14.7 31.2L14.0 32.0L13.2 32.9L12.3 33.7L11.5 34.4L10.6 35.2L9.7 35.9L8.8 36.5M5.8 2.0L6.7 2.1L7.5 2.2L8.3 2.3L9.0 2.5L9.7 2.8L10.5 3.1L11.1 3.4L11.8 3.8L12.4 4.2L13.0 4.7L13.5 5.2L14.0 5.7L14.5 6.3L14.9 6.9L15.3 7.5L15.6 8.2L15.9 8.9L16.1 9.6L16.3 10.4L16.5 11.2L16.6 12.0L16.6 12.8L16.6 13.7L16.6 14.5L16.5 15.4L16.4 16.3L16.2 17.2L16.0 18.1L15.7 19.0L15.4 19.9L15.1 20.8L14.7 21.6L14.2 22.5L13.8 23.4L13.2 24.3L12.7 25.1L12.1 26.0L11.5 26.8L10.8 27.6L10.1 28.3L9.4 29.1L8.6 29.8L7.9 30.5L7.1 31.2L6.3 31.8L5.4 32.4L4.6 32.9L3.7 33.5L2.8 33.9L1.9 34.4L1.1 34.8L0.2 35.1L-0.7 35.4L-1.6 35.7L-2.5 35.9M-2.6 3.5L-1.9 3.3L-1.2 3.1L-0.4 2.9L0.3 2.8L1.0 2.8L1.7 2.7L2.4 2.7L3.1 2.8L3.8 2.9L4.4 3.0L5.0 3.2L5.6 3.4L6.2 3.6L6.8 3.9L7.3 4.2L7.8 4.5L8.3 4.9L8.7 5.3L9.1 5.8L9.5 6.2L9.9 6.7L10.2 7.3L10.4 7.8L10.7 8.4L10.9 9.0L11.0 9.6L11.2 10.3L11.3 11.0L11.3 11.6L11.3 12.3L11.3 13.0L11.2 13.8L11.1 14.5L11.0 15.2L10.8 16.0L10.6 16.7L10.3 17.4L10.0 18.2L9.7 18.9L9.3 19.6L8.9 20.4L8.5 21.1L8.1 21.8L7.6 22.5L7.0 23.1L6.5 23.8L5.9 24.4L5.3 25.0L4.7 25.6L4.1 26.2L3.4 26.7L2.8 27.3L2.1 27.8L1.4 28.2L0.7 28.6L-0.1 29.0L-0.8 29.4L-1.5 29.7L-2.3 30.0M-2.4 4.9L-1.8 4.9L-1.3 4.9L-0.8 4.9L-0.3 4.9L0.1 5.0L0.6 5.1L1.1 5.2L1.5 5.3L1.9 5.5L2.3 5.7L2.7 5.9L3.1 6.2L3.4 6.4L3.7 6.7L4.0 7.1L4.3 7.4L4.5 7.8L4.8 8.2L5.0 8.6L5.1 9.0L5.3 9.4L5.4 9.9L5.5 10.3L5.6 10.8L5.6 11.3L5.6 11.8L5.6 12.3L5.5 12.8L5.5 13.4L5.3 13.9L5.2 14.4L5.1 15.0L4.9 15.5L4.7 16.0L4.4 16.6L4.2 17.1L3.9 17.6L3.6 18.1L3.2 18.6L2.9 19.1L2.5 19.6L2.1 20.1L1.7 20.5L1.3 21.0L0.8 21.4L0.4 21.8L-0.1 22.2L-0.6 22.6L-1.1 22.9L-1.6 23.3L-2.1 23.6M-2.2 8.6L-2.0 8.7L-1.7 8.9L-1.5 9.0L-1.4 9.2L-1.2 9.3L-1.0 9.5L-0.9 9.7L-0.7 9.9L-0.6 10.1L-0.5 10.3L-0.4 10.6L-0.3 10.8L-0.3 11.0L-0.2 11.3L-0.2 11.6L-0.2 11.8L-0.1 12.1L-0.2 12.4L-0.2 12.7L-0.2 13.0L-0.3 13.3L-0.4 13.6L-0.4 13.8L-0.5 14.1L-0.7 14.4L-0.8 14.7L-0.9 15.0L-1.1 15.3L-1.3 15.6L-1.4 15.9L-1.6 16.1L-1.8 16.4L-2.1 16.7"/><path fill="none" stroke="#fff" stroke-width="1.2" d="M28.1 23.8L28.1 24.7L28.0 25.5L28.0 26.4L27.8 27.3L27.7 28.2L27.4 29.1L27.2 30.1L26.8 31.0L26.5 31.9L26.1 32.8L25.6 33.7L25.1 34.6L24.6 35.5L24.0 36.3M26.0 15.2L26.3 16.0L26.6 16.9L26.8 17.7L27.0 18.6L27.1 19.5L27.1 20.4L27.2 21.4L27.1 22.3L27.0 23.3L26.9 24.3L26.7 25.3L26.4 26.3L26.1 27.3L25.8 28.3L25.4 29.3L24.9 30.3L24.4 31.3L23.9 32.3L23.3 33.3L22.7 34.3L22.0 35.2L21.3 36.1M21.2 8.5L21.8 9.1L22.3 9.8L22.8 10.5L23.2 11.2L23.6 12.0L23.9 12.8L24.2 13.7L24.4 14.6L24.6 15.5L24.7 16.4L24.8 17.4L24.8 18.3L24.8 19.3L24.7 20.3L24.5 21.3L24.3 22.4L24.1 23.4L23.8 24.4L23.4 25.5L23.0 26.5L22.6 27.6L22.0 28.6L21.5 29.6L20.9 30.6L20.2 31.6L19.6 32.5L18.8 33.5L18.1 34.4L17.3 35.3L16.4 36.1M14.4 3.9L15.1 4.3L15.8 4.7L16.5 5.2L17.1 5.7L17.7 6.2L18.3 6.8L18.8 7.5L19.3 8.2L19.7 8.9L20.1 9.6L20.4 10.4L20.7 11.2L20.9 12.1L21.1 12.9L21.2 13.8L21.2 14.8L21.2 15.7L21.2 16.7L21.1 17.6L21.0 18.6L20.8 19.6L20.5 20.6L20.2 21.6L19.9 22.6L19.5 23.6L19.1 24.6L18.6 25.6L18.0 26.5L17.5 27.5L16.8 28.5L16.2 29.4L15.5 30.3L14.7 31.2L14.0 32.0L13.2 32.9L12.3 33.7L11.5 34.4L10.6 35.2L9.7 35.9L8.8 36.5M5.8 2.0L6.7 2.1L7.5 2.2L8.3 2.3L9.0 2.5L9.7 2.8L10.5 3.1L11.1 3.4L11.8 3.8L12.4 4.2L13.0 4.7L13.5 5.2L14.0 5.7L14.5 6.3L14.9 6.9L15.3 7.5L15.6 8.2L15.9 8.9L16.1 9.6L16.3 10.4L16.5 11.2L16.6 12.0L16.6 12.8L16.6 13.7L16.6 14.5L16.5 15.4L16.4 16.3L16.2 17.2L16.0 18.1L15.7 19.0L15.4 19.9L15.1 20.8L14.7 21.6L14.2 22.5L13.8 23.4L13.2 24.3L12.7 25.1L12.1 26.0L11.5 26.8L10.8 27.6L10.1 28.3L9.4 29.1L8.6 29.8L7.9 30.5L7.1 31.2L6.3 31.8L5.4 32.4L4.6 32.9L3.7 33.5L2.8 33.9L1.9 34.4L1.1 34.8L0.2 35.1L-0.7 35.4L-1.6 35.7L-2.5 35.9M-2.6 3.5L-1.9 3.3L-1.2 3.1L-0.4 2.9L0.3 2.8L1.0 2.8L1.7 2.7L2.4 2.7L3.1 2.8L3.8 2.9L4.4 3.0L5.0 3.2L5.6 3.4L6.2 3.6L6.8 3.9L7.3 4.2L7.8 4.5L8.3 4.9L8.7 5.3L9.1 5.8L9.5 6.2L9.9 6.7L10.2 7.3L10.4 7.8L10.7 8.4L10.9 9.0L11.0 9.6L11.2 10.3L11.3 11.0L11.3 11.6L11.3 12.3L11.3 13.0L11.2 13.8L11.1 14.5L11.0 15.2L10.8 16.0L10.6 16.7L10.3 17.4L10.0 18.2L9.7 18.9L9.3 19.6L8.9 20.4L8.5 21.1L8.1 21.8L7.6 22.5L7.0 23.1L6.5 23.8L5.9 24.4L5.3 25.0L4.7 25.6L4.1 26.2L3.4 26.7L2.8 27.3L2.1 27.8L1.4 28.2L0.7 28.6L-0.1 29.0L-0.8 29.4L-1.5 29.7L-2.3 30.0M-2.4 4.9L-1.8 4.9L-1.3 4.9L-0.8 4.9L-0.3 4.9L0.1 5.0L0.6 5.1L1.1 5.2L1.5 5.3L1.9 5.5L2.3 5.7L2.7 5.9L3.1 6.2L3.4 6.4L3.7 6.7L4.0 7.1L4.3 7.4L4.5 7.8L4.8 8.2L5.0 8.6L5.1 9.0L5.3 9.4L5.4 9.9L5.5 10.3L5.6 10.8L5.6 11.3L5.6 11.8L5.6 12.3L5.5 12.8L5.5 13.4L5.3 13.9L5.2 14.4L5.1 15.0L4.9 15.5L4.7 16.0L4.4 16.6L4.2 17.1L3.9 17.6L3.6 18.1L3.2 18.6L2.9 19.1L2.5 19.6L2.1 20.1L1.7 20.5L1.3 21.0L0.8 21.4L0.4 21.8L-0.1 22.2L-0.6 22.6L-1.1 22.9L-1.6 23.3L-2.1 23.6M-2.2 8.6L-2.0 8.7L-1.7 8.9L-1.5 9.0L-1.4 9.2L-1.2 9.3L-1.0 9.5L-0.9 9.7L-0.7 9.9L-0.6 10.1L-0.5 10.3L-0.4 10.6L-0.3 10.8L-0.3 11.0L-0.2 11.3L-0.2 11.6L-0.2 11.8L-0.1 12.1L-0.2 12.4L-0.2 12.7L-0.2 13.0L-0.3 13.3L-0.4 13.6L-0.4 13.8L-0.5 14.1L-0.7 14.4L-0.8 14.7L-0.9 15.0L-1.1 15.3L-1.3 15.6L-1.4 15.9L-1.6 16.1L-1.8 16.4L-2.1 16.7"/><circle cx="5.2" cy="24.9" r="22.700" fill="none" stroke="#fff" stroke-width=".8"/></g></g></svg>
<div class="bx" style="left:766.500px;top:283.0px;width:76.400px;height:18.600px;border-radius:4px;background:#e6f4ea;"></div>
<svg style="left:847.2px;top:285.7px" width="13.5" height="13.5" viewBox="0 0 24 24"><path fill="#70757a" d="M11 7h2v2h-2zm0 4h2v6h-2zm1-9C6.480 2 2 6.480 2 12s4.480 10 10 10 10-4.480 10-10S17.520 2 12 2zm0 18c-4.410 0-8-3.590-8-8s3.590-8 8-8 8 3.590 8 8-3.590 8-8 8z"/></svg>
<svg style="left:970.3px;top:269.2px" width="24" height="24" viewBox="0 0 24 24"><path fill="#3c4043" d="M16.590 8.590L12 13.170 7.410 8.590 6 10l6 6 6-6z"/></svg>
<svg style="left:114.2px;top:366.9px" width="14" height="14" viewBox="0 0 24 24"><path fill="#5f6368" d="M11 7h2v2h-2zm0 4h2v6h-2zm1-9C6.480 2 2 6.480 2 12s4.480 10 10 10 10-4.480 10-10S17.520 2 12 2zm0 18c-4.410 0-8-3.590-8-8s3.590-8 8-8 8 3.590 8 8-3.590 8-8 8z"/></svg>
<svg style="left:52.3px;top:409.5px;overflow:hidden" width="33.700" height="33.700" viewBox="0 0 34 34"><g clip-path="url(#usq)"><rect width="34" height="34" fill="#233f90"/><g clip-path="url(#ucl)"><path fill="#fff" d="M1.6 2.3L1.0 2.4L0.5 2.6L-0.1 2.8L-0.6 3.1L-1.1 3.5L-1.6 3.8L-2.1 4.3L-2.5 4.8L-3.0 5.3L-3.4 5.9L-3.8 6.5L-4.2 7.2L-3.2 7.1L-2.7 6.4L-2.1 5.8L-1.6 5.2L-1.0 4.7L-0.4 4.2L0.2 3.7L0.8 3.3L1.4 3.0L2.0 2.7L2.6 2.4L3.3 2.2L3.9 2.1ZM9.5 2.4L8.8 2.3L8.1 2.3L7.3 2.3L6.6 2.4L5.9 2.5L5.1 2.7L4.4 2.9L3.6 3.2L2.9 3.5L2.2 3.9L1.4 4.3L0.7 4.8L0.0 5.4L-0.7 5.9L-1.3 6.6L-2.0 7.2L-2.6 8.0L-3.3 8.7L-3.9 9.5L-3.3 9.7L-2.6 8.9L-1.9 8.2L-1.1 7.5L-0.3 6.9L0.4 6.3L1.2 5.7L2.0 5.2L2.9 4.8L3.7 4.4L4.5 4.0L5.3 3.7L6.1 3.4L7.0 3.2L7.8 3.1L8.6 3.0L9.4 2.9L10.2 2.9L11.0 3.0L11.7 3.1ZM18.5 6.3L17.9 5.9L17.2 5.5L16.5 5.2L15.7 4.9L14.9 4.6L14.1 4.4L13.3 4.3L12.5 4.2L11.6 4.2L10.7 4.2L9.8 4.2L8.9 4.3L8.0 4.5L7.1 4.7L6.2 4.9L5.3 5.3L4.4 5.6L3.4 6.0L2.5 6.4L1.6 6.9L0.7 7.5L-0.2 8.0L-1.1 8.6L-1.9 9.3L-2.8 10.0L-3.6 10.7L-3.3 11.0L-2.4 10.3L-1.5 9.7L-0.5 9.2L0.4 8.6L1.4 8.1L2.4 7.7L3.4 7.2L4.4 6.9L5.4 6.5L6.4 6.3L7.4 6.0L8.3 5.8L9.3 5.7L10.3 5.6L11.2 5.5L12.2 5.5L13.1 5.5L14.0 5.6L14.9 5.7L15.8 5.9L16.6 6.1L17.4 6.4L18.2 6.7L18.9 7.1L19.6 7.5L20.3 7.9ZM25.6 14.5L25.2 13.8L24.8 13.2L24.3 12.5L23.8 11.9L23.2 11.4L22.6 10.9L22.0 10.4L21.3 9.9L20.5 9.5L19.8 9.1L19.0 8.8L18.1 8.4L17.3 8.2L16.4 7.9L15.5 7.8L14.5 7.6L13.5 7.5L12.6 7.4L11.5 7.4L10.5 7.4L9.5 7.5L8.4 7.6L7.4 7.8L6.3 8.0L5.3 8.2L4.2 8.5L3.1 8.8L2.1 9.1L1.0 9.5L0.0 9.9L-1.0 10.4L-2.0 10.9L-3.0 11.4L-4.0 12.0L-3.9 12.2L-2.9 11.8L-1.8 11.4L-0.8 11.0L0.3 10.6L1.4 10.3L2.5 10.1L3.6 9.8L4.7 9.6L5.8 9.4L6.9 9.3L7.9 9.2L9.0 9.1L10.1 9.1L11.2 9.1L12.2 9.2L13.3 9.3L14.3 9.4L15.3 9.6L16.3 9.8L17.2 10.0L18.1 10.3L19.0 10.6L19.8 11.0L20.7 11.4L21.4 11.8L22.2 12.2L22.9 12.7L23.5 13.2L24.1 13.7L24.7 14.3L25.2 14.9L25.7 15.5L26.1 16.1L26.5 16.8ZM28.0 23.2L27.9 22.5L27.8 21.8L27.6 21.2L27.3 20.5L27.0 19.9L26.6 19.3L26.2 18.7L25.8 18.1L25.2 17.5L24.7 16.9L24.1 16.4L23.4 15.9L22.7 15.4L22.0 14.9L21.2 14.4L20.4 14.0L19.5 13.6L18.6 13.2L17.7 12.9L16.7 12.6L15.7 12.3L14.7 12.0L13.7 11.8L12.6 11.6L11.6 11.4L10.5 11.3L9.4 11.2L8.3 11.2L7.2 11.1L6.0 11.1L4.9 11.2L3.8 11.2L2.7 11.3L1.6 11.5L0.5 11.6L-0.6 11.8L-1.7 12.1L-2.8 12.3L-3.8 12.6L-3.8 13.0L-2.8 12.8L-1.7 12.7L-0.7 12.6L0.4 12.5L1.5 12.5L2.7 12.5L3.8 12.5L4.9 12.5L6.0 12.6L7.1 12.7L8.2 12.9L9.3 13.0L10.4 13.2L11.5 13.5L12.6 13.7L13.6 14.0L14.7 14.3L15.7 14.6L16.7 15.0L17.6 15.4L18.6 15.8L19.4 16.2L20.3 16.7L21.1 17.1L21.9 17.6L22.7 18.1L23.4 18.6L24.0 19.2L24.6 19.7L25.2 20.3L25.7 20.9L26.2 21.4L26.6 22.0L27.0 22.6L27.3 23.2L27.5 23.8L27.7 24.4L27.9 25.1L28.0 25.7ZM27.3 30.9L27.4 30.4L27.5 29.9L27.5 29.4L27.4 28.9L27.3 28.3L27.1 27.8L26.9 27.2L26.6 26.7L26.3 26.1L25.9 25.5L25.5 25.0L25.0 24.4L24.5 23.9L24.0 23.3L23.4 22.7L22.7 22.2L22.0 21.6L21.3 21.1L20.5 20.6L19.7 20.0L18.8 19.5L17.9 19.0L17.0 18.6L16.1 18.1L15.1 17.7L14.1 17.2L13.1 16.8L12.1 16.4L11.1 16.0L10.0 15.7L8.9 15.4L7.8 15.1L6.7 14.8L5.7 14.5L4.6 14.3L3.5 14.1L2.4 13.9L1.3 13.7L0.2 13.6L-0.8 13.5L-1.9 13.4L-2.9 13.4L-3.9 13.4L-4.0 13.7L-3.1 13.9L-2.1 14.1L-1.1 14.3L-0.1 14.5L0.9 14.8L2.0 15.1L3.0 15.4L4.1 15.7L5.1 16.1L6.2 16.5L7.2 16.9L8.3 17.3L9.3 17.7L10.3 18.2L11.3 18.6L12.3 19.1L13.3 19.6L14.3 20.1L15.2 20.7L16.1 21.2L17.0 21.7L17.9 22.3L18.7 22.9L19.5 23.4L20.3 24.0L21.0 24.5L21.7 25.1L22.3 25.7L23.0 26.2L23.5 26.8L24.0 27.4L24.5 27.9L24.9 28.5L25.3 29.0L25.7 29.5L25.9 30.0L26.2 30.5L26.4 31.0L26.5 31.5L26.6 32.0L26.6 32.4L26.6 32.8L26.5 33.2ZM25.0 36.3L25.1 36.0L25.1 35.7L25.1 35.4L25.0 35.1L24.9 34.7L24.7 34.3L24.5 33.9L24.2 33.4L23.9 33.0L23.6 32.5L23.2 32.0L22.7 31.4L22.3 30.9L21.7 30.4L21.2 29.8L20.6 29.2L19.9 28.6L19.3 28.0L18.5 27.4L17.8 26.8L17.0 26.2L16.2 25.6L15.4 25.0L14.5 24.4L13.7 23.8L12.8 23.1L11.9 22.5L10.9 21.9L10.0 21.3L9.0 20.7L8.1 20.2L7.1 19.6L6.1 19.0L5.2 18.5L4.2 18.0L3.2 17.5L2.2 17.0L1.3 16.5L0.3 16.1L-0.6 15.6L-1.6 15.2L-2.5 14.8L-3.4 14.5L-3.7 15.0L-2.9 15.4L-2.0 16.0L-1.2 16.5L-0.4 17.1L0.5 17.6L1.4 18.2L2.3 18.8L3.2 19.5L4.1 20.1L5.0 20.8L5.9 21.4L6.8 22.1L7.7 22.8L8.6 23.4L9.5 24.1L10.3 24.8L11.2 25.5L12.1 26.2L12.9 26.9L13.7 27.5L14.5 28.2L15.3 28.9L16.0 29.5L16.7 30.2L17.4 30.8L18.1 31.4L18.7 32.0L19.3 32.6L19.9 33.1L20.4 33.7L20.9 34.2L21.4 34.7L21.8 35.2L22.1 35.6L22.5 36.1L22.8 36.5L23.0 36.8L23.2 37.2L23.4 37.5L23.5 37.8L23.6 38.0L23.6 38.2L23.6 38.4ZM18.2 37.4L17.7 36.8L17.2 36.3L16.6 35.7L16.0 35.2L15.4 34.5L14.8 33.9L14.1 33.2L13.4 32.6L12.7 31.9L12.0 31.1L11.2 30.4L10.5 29.7L9.7 28.9L8.9 28.2L8.1 27.4L7.3 26.6L6.5 25.8L5.7 25.0L4.9 24.2L4.1 23.5L3.3 22.7L2.5 21.9L1.7 21.1L1.0 20.4L0.2 19.6L-0.6 18.9L-1.3 18.2L-2.0 17.5L-2.8 16.8L-3.5 16.1L-4.0 16.6L-3.4 17.4L-2.8 18.2L-2.2 19.0L-1.6 19.8L-0.9 20.7L-0.3 21.5L0.4 22.4L1.1 23.2L1.8 24.1L2.5 25.0L3.2 25.8L3.9 26.7L4.7 27.6L5.4 28.4L6.1 29.3L6.8 30.1L7.5 30.9L8.2 31.7L8.9 32.5L9.6 33.3L10.3 34.1L11.0 34.8L11.6 35.5L12.3 36.2L12.9 36.8L13.5 37.5L14.1 38.1L14.7 38.6L15.2 39.2L15.7 39.6ZM7.8 37.1L7.2 36.3L6.5 35.6L5.9 34.7L5.3 33.9L4.6 33.0L4.0 32.1L3.4 31.2L2.8 30.3L2.1 29.4L1.5 28.4L0.9 27.5L0.3 26.5L-0.2 25.6L-0.8 24.6L-1.4 23.7L-1.9 22.7L-2.4 21.7L-2.9 20.8L-3.4 19.9L-4.4 20.4L-4.1 21.4L-3.7 22.5L-3.3 23.5L-2.9 24.5L-2.5 25.5L-2.0 26.6L-1.5 27.6L-1.1 28.6L-0.6 29.6L-0.0 30.6L0.5 31.6L1.0 32.5L1.6 33.5L2.1 34.4L2.7 35.3L3.3 36.2L3.8 37.0L4.4 37.9L5.0 38.6ZM-0.0 37.5L-0.5 36.6L-1.0 35.6L-1.5 34.7L-1.9 33.7L-2.3 32.7L-2.8 31.7L-3.2 30.6L-5.3 31.1L-5.0 32.2L-4.7 33.2L-4.3 34.2L-3.9 35.2L-3.6 36.2L-3.1 37.2L-2.7 38.1Z"/><path fill="none" stroke="#233f90" stroke-width="2.2" d="M28.1 23.8L28.1 24.7L28.0 25.5L28.0 26.4L27.8 27.3L27.7 28.2L27.4 29.1L27.2 30.1L26.8 31.0L26.5 31.9L26.1 32.8L25.6 33.7L25.1 34.6L24.6 35.5L24.0 36.3M26.0 15.2L26.3 16.0L26.6 16.9L26.8 17.7L27.0 18.6L27.1 19.5L27.1 20.4L27.2 21.4L27.1 22.3L27.0 23.3L26.9 24.3L26.7 25.3L26.4 26.3L26.1 27.3L25.8 28.3L25.4 29.3L24.9 30.3L24.4 31.3L23.9 32.3L23.3 33.3L22.7 34.3L22.0 35.2L21.3 36.1M21.2 8.5L21.8 9.1L22.3 9.8L22.8 10.5L23.2 11.2L23.6 12.0L23.9 12.8L24.2 13.7L24.4 14.6L24.6 15.5L24.7 16.4L24.8 17.4L24.8 18.3L24.8 19.3L24.7 20.3L24.5 21.3L24.3 22.4L24.1 23.4L23.8 24.4L23.4 25.5L23.0 26.5L22.6 27.6L22.0 28.6L21.5 29.6L20.9 30.6L20.2 31.6L19.6 32.5L18.8 33.5L18.1 34.4L17.3 35.3L16.4 36.1M14.4 3.9L15.1 4.3L15.8 4.7L16.5 5.2L17.1 5.7L17.7 6.2L18.3 6.8L18.8 7.5L19.3 8.2L19.7 8.9L20.1 9.6L20.4 10.4L20.7 11.2L20.9 12.1L21.1 12.9L21.2 13.8L21.2 14.8L21.2 15.7L21.2 16.7L21.1 17.6L21.0 18.6L20.8 19.6L20.5 20.6L20.2 21.6L19.9 22.6L19.5 23.6L19.1 24.6L18.6 25.6L18.0 26.5L17.5 27.5L16.8 28.5L16.2 29.4L15.5 30.3L14.7 31.2L14.0 32.0L13.2 32.9L12.3 33.7L11.5 34.4L10.6 35.2L9.7 35.9L8.8 36.5M5.8 2.0L6.7 2.1L7.5 2.2L8.3 2.3L9.0 2.5L9.7 2.8L10.5 3.1L11.1 3.4L11.8 3.8L12.4 4.2L13.0 4.7L13.5 5.2L14.0 5.7L14.5 6.3L14.9 6.9L15.3 7.5L15.6 8.2L15.9 8.9L16.1 9.6L16.3 10.4L16.5 11.2L16.6 12.0L16.6 12.8L16.6 13.7L16.6 14.5L16.5 15.4L16.4 16.3L16.2 17.2L16.0 18.1L15.7 19.0L15.4 19.9L15.1 20.8L14.7 21.6L14.2 22.5L13.8 23.4L13.2 24.3L12.7 25.1L12.1 26.0L11.5 26.8L10.8 27.6L10.1 28.3L9.4 29.1L8.6 29.8L7.9 30.5L7.1 31.2L6.3 31.8L5.4 32.4L4.6 32.9L3.7 33.5L2.8 33.9L1.9 34.4L1.1 34.8L0.2 35.1L-0.7 35.4L-1.6 35.7L-2.5 35.9M-2.6 3.5L-1.9 3.3L-1.2 3.1L-0.4 2.9L0.3 2.8L1.0 2.8L1.7 2.7L2.4 2.7L3.1 2.8L3.8 2.9L4.4 3.0L5.0 3.2L5.6 3.4L6.2 3.6L6.8 3.9L7.3 4.2L7.8 4.5L8.3 4.9L8.7 5.3L9.1 5.8L9.5 6.2L9.9 6.7L10.2 7.3L10.4 7.8L10.7 8.4L10.9 9.0L11.0 9.6L11.2 10.3L11.3 11.0L11.3 11.6L11.3 12.3L11.3 13.0L11.2 13.8L11.1 14.5L11.0 15.2L10.8 16.0L10.6 16.7L10.3 17.4L10.0 18.2L9.7 18.9L9.3 19.6L8.9 20.4L8.5 21.1L8.1 21.8L7.6 22.5L7.0 23.1L6.5 23.8L5.9 24.4L5.3 25.0L4.7 25.6L4.1 26.2L3.4 26.7L2.8 27.3L2.1 27.8L1.4 28.2L0.7 28.6L-0.1 29.0L-0.8 29.4L-1.5 29.7L-2.3 30.0M-2.4 4.9L-1.8 4.9L-1.3 4.9L-0.8 4.9L-0.3 4.9L0.1 5.0L0.6 5.1L1.1 5.2L1.5 5.3L1.9 5.5L2.3 5.7L2.7 5.9L3.1 6.2L3.4 6.4L3.7 6.7L4.0 7.1L4.3 7.4L4.5 7.8L4.8 8.2L5.0 8.6L5.1 9.0L5.3 9.4L5.4 9.9L5.5 10.3L5.6 10.8L5.6 11.3L5.6 11.8L5.6 12.3L5.5 12.8L5.5 13.4L5.3 13.9L5.2 14.4L5.1 15.0L4.9 15.5L4.7 16.0L4.4 16.6L4.2 17.1L3.9 17.6L3.6 18.1L3.2 18.6L2.9 19.1L2.5 19.6L2.1 20.1L1.7 20.5L1.3 21.0L0.8 21.4L0.4 21.8L-0.1 22.2L-0.6 22.6L-1.1 22.9L-1.6 23.3L-2.1 23.6M-2.2 8.6L-2.0 8.7L-1.7 8.9L-1.5 9.0L-1.4 9.2L-1.2 9.3L-1.0 9.5L-0.9 9.7L-0.7 9.9L-0.6 10.1L-0.5 10.3L-0.4 10.6L-0.3 10.8L-0.3 11.0L-0.2 11.3L-0.2 11.6L-0.2 11.8L-0.1 12.1L-0.2 12.4L-0.2 12.7L-0.2 13.0L-0.3 13.3L-0.4 13.6L-0.4 13.8L-0.5 14.1L-0.7 14.4L-0.8 14.7L-0.9 15.0L-1.1 15.3L-1.3 15.6L-1.4 15.9L-1.6 16.1L-1.8 16.4L-2.1 16.7"/><path fill="none" stroke="#fff" stroke-width="1.2" d="M28.1 23.8L28.1 24.7L28.0 25.5L28.0 26.4L27.8 27.3L27.7 28.2L27.4 29.1L27.2 30.1L26.8 31.0L26.5 31.9L26.1 32.8L25.6 33.7L25.1 34.6L24.6 35.5L24.0 36.3M26.0 15.2L26.3 16.0L26.6 16.9L26.8 17.7L27.0 18.6L27.1 19.5L27.1 20.4L27.2 21.4L27.1 22.3L27.0 23.3L26.9 24.3L26.7 25.3L26.4 26.3L26.1 27.3L25.8 28.3L25.4 29.3L24.9 30.3L24.4 31.3L23.9 32.3L23.3 33.3L22.7 34.3L22.0 35.2L21.3 36.1M21.2 8.5L21.8 9.1L22.3 9.8L22.8 10.5L23.2 11.2L23.6 12.0L23.9 12.8L24.2 13.7L24.4 14.6L24.6 15.5L24.7 16.4L24.8 17.4L24.8 18.3L24.8 19.3L24.7 20.3L24.5 21.3L24.3 22.4L24.1 23.4L23.8 24.4L23.4 25.5L23.0 26.5L22.6 27.6L22.0 28.6L21.5 29.6L20.9 30.6L20.2 31.6L19.6 32.5L18.8 33.5L18.1 34.4L17.3 35.3L16.4 36.1M14.4 3.9L15.1 4.3L15.8 4.7L16.5 5.2L17.1 5.7L17.7 6.2L18.3 6.8L18.8 7.5L19.3 8.2L19.7 8.9L20.1 9.6L20.4 10.4L20.7 11.2L20.9 12.1L21.1 12.9L21.2 13.8L21.2 14.8L21.2 15.7L21.2 16.7L21.1 17.6L21.0 18.6L20.8 19.6L20.5 20.6L20.2 21.6L19.9 22.6L19.5 23.6L19.1 24.6L18.6 25.6L18.0 26.5L17.5 27.5L16.8 28.5L16.2 29.4L15.5 30.3L14.7 31.2L14.0 32.0L13.2 32.9L12.3 33.7L11.5 34.4L10.6 35.2L9.7 35.9L8.8 36.5M5.8 2.0L6.7 2.1L7.5 2.2L8.3 2.3L9.0 2.5L9.7 2.8L10.5 3.1L11.1 3.4L11.8 3.8L12.4 4.2L13.0 4.7L13.5 5.2L14.0 5.7L14.5 6.3L14.9 6.9L15.3 7.5L15.6 8.2L15.9 8.9L16.1 9.6L16.3 10.4L16.5 11.2L16.6 12.0L16.6 12.8L16.6 13.7L16.6 14.5L16.5 15.4L16.4 16.3L16.2 17.2L16.0 18.1L15.7 19.0L15.4 19.9L15.1 20.8L14.7 21.6L14.2 22.5L13.8 23.4L13.2 24.3L12.7 25.1L12.1 26.0L11.5 26.8L10.8 27.6L10.1 28.3L9.4 29.1L8.6 29.8L7.9 30.5L7.1 31.2L6.3 31.8L5.4 32.4L4.6 32.9L3.7 33.5L2.8 33.9L1.9 34.4L1.1 34.8L0.2 35.1L-0.7 35.4L-1.6 35.7L-2.5 35.9M-2.6 3.5L-1.9 3.3L-1.2 3.1L-0.4 2.9L0.3 2.8L1.0 2.8L1.7 2.7L2.4 2.7L3.1 2.8L3.8 2.9L4.4 3.0L5.0 3.2L5.6 3.4L6.2 3.6L6.8 3.9L7.3 4.2L7.8 4.5L8.3 4.9L8.7 5.3L9.1 5.8L9.5 6.2L9.9 6.7L10.2 7.3L10.4 7.8L10.7 8.4L10.9 9.0L11.0 9.6L11.2 10.3L11.3 11.0L11.3 11.6L11.3 12.3L11.3 13.0L11.2 13.8L11.1 14.5L11.0 15.2L10.8 16.0L10.6 16.7L10.3 17.4L10.0 18.2L9.7 18.9L9.3 19.6L8.9 20.4L8.5 21.1L8.1 21.8L7.6 22.5L7.0 23.1L6.5 23.8L5.9 24.4L5.3 25.0L4.7 25.6L4.1 26.2L3.4 26.7L2.8 27.3L2.1 27.8L1.4 28.2L0.7 28.6L-0.1 29.0L-0.8 29.4L-1.5 29.7L-2.3 30.0M-2.4 4.9L-1.8 4.9L-1.3 4.9L-0.8 4.9L-0.3 4.9L0.1 5.0L0.6 5.1L1.1 5.2L1.5 5.3L1.9 5.5L2.3 5.7L2.7 5.9L3.1 6.2L3.4 6.4L3.7 6.7L4.0 7.1L4.3 7.4L4.5 7.8L4.8 8.2L5.0 8.6L5.1 9.0L5.3 9.4L5.4 9.9L5.5 10.3L5.6 10.8L5.6 11.3L5.6 11.8L5.6 12.3L5.5 12.8L5.5 13.4L5.3 13.9L5.2 14.4L5.1 15.0L4.9 15.5L4.7 16.0L4.4 16.6L4.2 17.1L3.9 17.6L3.6 18.1L3.2 18.6L2.9 19.1L2.5 19.6L2.1 20.1L1.7 20.5L1.3 21.0L0.8 21.4L0.4 21.8L-0.1 22.2L-0.6 22.6L-1.1 22.9L-1.6 23.3L-2.1 23.6M-2.2 8.6L-2.0 8.7L-1.7 8.9L-1.5 9.0L-1.4 9.2L-1.2 9.3L-1.0 9.5L-0.9 9.7L-0.7 9.9L-0.6 10.1L-0.5 10.3L-0.4 10.6L-0.3 10.8L-0.3 11.0L-0.2 11.3L-0.2 11.6L-0.2 11.8L-0.1 12.1L-0.2 12.4L-0.2 12.7L-0.2 13.0L-0.3 13.3L-0.4 13.6L-0.4 13.8L-0.5 14.1L-0.7 14.4L-0.8 14.7L-0.9 15.0L-1.1 15.3L-1.3 15.6L-1.4 15.9L-1.6 16.1L-1.8 16.4L-2.1 16.7"/><circle cx="5.2" cy="24.9" r="22.700" fill="none" stroke="#fff" stroke-width=".8"/></g></g></svg>
<div class="bx" style="left:225px;top:417px;width:61px;height:19px;border:1px solid #dadce0;border-radius:4px;"></div>
<div class="bx" style="left:874px;top:415px;width:119.500px;height:30.500px;border:1px solid #dadce0;border-radius:16px;"></div>
<svg style="left:886.300px;top:418.300px" width="24" height="24" viewBox="0 0 24 24"><path fill="#1a73e8" d="M7.410 15.410L12 10.830l4.590 4.580L18 14l-6-6-6 6z"/></svg>
<div class="a" style="left:0;top:0;width:1017px;height:780px;overflow:hidden;">
<svg style="left:124.2px;top:509.8px" width="19.500" height="19.500" viewBox="0 0 24 24"><path fill="#5f6368" d="M19 14V6c0-1.100-.9-2-2-2H3c-1.100 0-2 .9-2 2v8c0 1.100.9 2 2 2h14c1.100 0 2-.9 2-2zm-2 0H3V6h14v8zm-7-7c-1.660 0-3 1.340-3 3s1.340 3 3 3 3-1.340 3-3-1.340-3-3-3zm13 0v11c0 1.100-.9 2-2 2H4v-2h17V7h2z"/></svg>
<svg style="left:124.2px;top:540.0px" width="19.500" height="19.500" viewBox="0 0 24 24"><path fill="#5f6368" d="M19 14V6c0-1.100-.9-2-2-2H3c-1.100 0-2 .9-2 2v8c0 1.100.9 2 2 2h14c1.100 0 2-.9 2-2zm-2 0H3V6h14v8zm-7-7c-1.660 0-3 1.340-3 3s1.340 3 3 3 3-1.340 3-3-1.340-3-3-3zm13 0v11c0 1.100-.9 2-2 2H4v-2h17V7h2z"/></svg>
<svg style="left:124.2px;top:570.2px" width="19.500" height="19.500" viewBox="0 0 24 24"><path fill="#d93025" d="M19 6.410L17.590 5 12 10.590 6.410 5 5 6.410 10.590 12 5 17.590 6.410 19 12 13.410 17.590 19 19 17.590 13.410 12z"/></svg>
<svg style="left:124.2px;top:600.5px" width="19.500" height="19.500" viewBox="0 0 24 24"><path fill="#d93025" d="M19 6.410L17.590 5 12 10.590 6.410 5 5 6.410 10.590 12 5 17.590 6.410 19 12 13.410 17.590 19 19 17.590 13.410 12z"/></svg>
<svg style="left:124.2px;top:642.3px" width="19.500" height="19.500" viewBox="0 0 24 24"><path fill="#1e8e3e" d="M9 16.170L4.830 12l-1.420 1.410L9 19 21 7l-1.410-1.410z"/></svg>
<svg style="left:124.2px;top:672.7px" width="19.500" height="19.500" viewBox="0 0 24 24"><path fill="#1e8e3e" d="M9 16.170L4.830 12l-1.420 1.410L9 19 21 7l-1.410-1.410z"/></svg>
<div class="bx" style="left:124.0px;top:720px;width:258.500px;height:30.500px;border-radius:16px;background:#1a73e8;"></div>
<svg style="left:421.9px;top:509.2px" width="19.500" height="19.500" viewBox="0 0 24 24"><path fill="#1e8e3e" d="M9 16.170L4.830 12l-1.420 1.410L9 19 21 7l-1.410-1.410z"/></svg>
<svg style="left:421.9px;top:539.4px" width="19.500" height="19.500" viewBox="0 0 24 24"><path fill="#1e8e3e" d="M9 16.170L4.830 12l-1.420 1.410L9 19 21 7l-1.410-1.410z"/></svg>
<svg style="left:421.9px;top:570.2px" width="19.500" height="19.500" viewBox="0 0 24 24"><path fill="#5f6368" d="M19 14V6c0-1.100-.9-2-2-2H3c-1.100 0-2 .9-2 2v8c0 1.100.9 2 2 2h14c1.100 0 2-.9 2-2zm-2 0H3V6h14v8zm-7-7c-1.660 0-3 1.340-3 3s1.340 3 3 3 3-1.340 3-3-1.340-3-3-3zm13 0v11c0 1.100-.9 2-2 2H4v-2h17V7h2z"/></svg>
<svg style="left:421.9px;top:600.5px" width="19.500" height="19.500" viewBox="0 0 24 24"><path fill="#d93025" d="M19 6.410L17.590 5 12 10.590 6.410 5 5 6.410 10.590 12 5 17.590 6.410 19 12 13.410 17.590 19 19 17.590 13.410 12z"/></svg>
<svg style="left:421.9px;top:642.3px" width="19.500" height="19.500" viewBox="0 0 24 24"><path fill="#1e8e3e" d="M9 16.170L4.830 12l-1.420 1.410L9 19 21 7l-1.410-1.410z"/></svg>
<svg style="left:421.9px;top:672.7px" width="19.500" height="19.500" viewBox="0 0 24 24"><path fill="#1e8e3e" d="M9 16.170L4.830 12l-1.420 1.410L9 19 21 7l-1.410-1.410z"/></svg>
<div class="bx" style="left:421.7px;top:720px;width:258.500px;height:30.500px;border-radius:16px;border:1px solid #dadce0;"></div>
<svg style="left:719.6px;top:509.2px" width="19.500" height="19.500" viewBox="0 0 24 24"><path fill="#1e8e3e" d="M9 16.170L4.830 12l-1.420 1.410L9 19 21 7l-1.410-1.410z"/></svg>
<svg style="left:719.6px;top:539.4px" width="19.500" height="19.500" viewBox="0 0 24 24"><path fill="#1e8e3e" d="M9 16.170L4.830 12l-1.420 1.410L9 19 21 7l-1.410-1.410z"/></svg>
<svg style="left:719.6px;top:570.2px" width="19.500" height="19.500" viewBox="0 0 24 24"><path fill="#5f6368" d="M19 14V6c0-1.100-.9-2-2-2H3c-1.100 0-2 .9-2 2v8c0 1.100.9 2 2 2h14c1.100 0 2-.9 2-2zm-2 0H3V6h14v8zm-7-7c-1.660 0-3 1.340-3 3s1.340 3 3 3 3-1.340 3-3-1.340-3-3-3zm13 0v11c0 1.100-.9 2-2 2H4v-2h17V7h2z"/></svg>
<svg style="left:719.6px;top:600.5px" width="19.500" height="19.500" viewBox="0 0 24 24"><path fill="#d93025" d="M19 6.410L17.590 5 12 10.590 6.410 5 5 6.410 10.590 12 5 17.590 6.410 19 12 13.410 17.590 19 19 17.590 13.410 12z"/></svg>
<svg style="left:719.6px;top:642.3px" width="19.500" height="19.500" viewBox="0 0 24 24"><path fill="#1e8e3e" d="M9 16.170L4.830 12l-1.420 1.410L9 19 21 7l-1.410-1.410z"/></svg>
<svg style="left:719.6px;top:672.7px" width="19.500" height="19.500" viewBox="0 0 24 24"><path fill="#1e8e3e" d="M9 16.170L4.830 12l-1.420 1.410L9 19 21 7l-1.410-1.410z"/></svg>
<div class="bx" style="left:719.4000000000001px;top:720px;width:258.500px;height:30.500px;border-radius:16px;border:1px solid #dadce0;"></div>
</div>
<div class="bx" style="left:974px;top:593.500px;width:39px;height:39px;border-radius:20px;background:#fff;box-shadow:0 1px 3px rgba(60,64,67,.28),0 0 1.500px rgba(60,64,67,.2);"></div>
<svg style="left:980px;top:600px" width="26" height="26" viewBox="0 0 26 26"><path fill="none" stroke="#5f6368" stroke-width="1.600" d="M10.600 7.500l5.300 5.200-5.300 5.200"/></svg>
<div class="a" style="left:26.6px;top:54.5px;font-size:31px;letter-spacing:0.7px;color:#202124">旧金山</div>
<div class="a" style="left:163.2px;top:54.5px;font-size:31px;letter-spacing:0.5px;color:#202124">首尔</div>
<div class="a" style="left:974.4px;top:22.7px;font-size:14px;letter-spacing:0.2px;color:#1a73e8">分享</div>
<div class="a" style="left:27.8px;top:98.5px;font-size:14px;letter-spacing:-0.5px;color:#5f6368">往返</div>
<div class="a" style="left:62.4px;top:97.5px;font-size:14px;color:#5f6368">·</div>
<div class="a" style="left:74.4px;top:98.5px;font-size:14px;letter-spacing:-0.35px;color:#5f6368">经济舱</div>
<div class="a" style="left:124.0px;top:97.5px;font-size:14px;color:#5f6368">·</div>
<div class="a" style="left:162.1px;top:98.5px;font-size:14px;letter-spacing:-0.5px;color:#5f6368">1 位乘客</div>
<div class="a" style="left:962.8px;top:98.5px;font-size:14px;letter-spacing:-0.4px;color:#5f6368">最低总价</div>
<div class="a" style="left:28.6px;top:141.5px;font-size:19.5px;letter-spacing:-0.5px;color:#202124">已选航班</div>
<div class="a" style="left:894.7px;top:142.8px;font-size:14px;letter-spacing:-0.43px;color:#1a73e8">跟踪票价</div>
<div class="a" style="left:914.6px;top:54.2px;font-size:31.5px;-webkit-text-stroke:.7px #202124;transform:scaleX(.89);transform-origin:0 50%;color:#202124">US$661</div>
<div class="a" style="left:117.8px;top:192.4px;font-size:14px;-webkit-text-stroke:.35px #202124;transform:scaleX(0.975);transform-origin:0 50%;color:#202124">6</div>
<div class="a" style="left:128.0px;top:191.7px;font-weight:500;font-size:15.4px;color:#202124">月</div>
<div class="a" style="left:142.5px;top:191.9px;font-size:14px;-webkit-text-stroke:.35px #202124;transform:scaleX(1.040);transform-origin:0 50%;color:#202124">22</div>
<div class="a" style="left:159.7px;top:191.7px;font-weight:500;font-size:15.4px;letter-spacing:0.6px;color:#202124">日周日</div>
<div class="a" style="left:213.3px;top:191.6px;font-size:14px;-webkit-text-stroke:.35px #202124;color:#202124">·</div>
<div class="a" style="left:224.0px;top:191.9px;font-size:14px;-webkit-text-stroke:.35px #202124;transform:scaleX(1.144);transform-origin:0 50%;color:#202124">10:40</div>
<div class="a" style="left:270.0px;top:191.4px;font-size:14px;-webkit-text-stroke:.35px #202124;transform:scaleX(0.844);transform-origin:0 50%;color:#202124">–</div>
<div class="a" style="left:282.2px;top:192.4px;font-size:14px;-webkit-text-stroke:.35px #202124;transform:scaleX(1.103);transform-origin:0 50%;color:#202124">15:00</div>
<div class="a" style="left:323.1px;top:190.5px;font-size:9px;-webkit-text-stroke:.25px #202124;color:#202124">+1</div>
<div class="a" style="left:118.0px;top:215.6px;font-size:12px;letter-spacing:-0.06px;color:#70757a">美联航 · 韩亚</div>
<div class="a" style="left:404.6px;top:192.4px;font-size:14px;transform:scaleX(0.879);transform-origin:0 50%;color:#202124">12</div>
<div class="a" style="left:423.3px;top:192.2px;font-size:15.4px;letter-spacing:1.3px;color:#202124">小时</div>
<div class="a" style="left:458.2px;top:192.4px;font-size:14px;transform:scaleX(1.120);transform-origin:0 50%;color:#202124">20</div>
<div class="a" style="left:479.4px;top:192.2px;font-size:15.4px;letter-spacing:1.1px;color:#202124">分钟</div>
<div class="a" style="left:405.6px;top:214.8px;font-size:11.5px;transform:scaleX(1.000);transform-origin:0 50%;color:#70757a">SFO–ICN</div>
<div class="a" style="left:583.8px;top:192.7px;font-size:15.4px;letter-spacing:0.6px;color:#202124">直达</div>
<div class="a" style="left:771.7px;top:192.4px;font-size:14px;transform:scaleX(1.052);transform-origin:0 50%;color:#202124">474</div>
<div class="a" style="left:801.5px;top:192.2px;font-size:15.4px;letter-spacing:0.43px;color:#202124">千克二氧化碳当量</div>
<div class="a" style="left:772.0px;top:214.4px;font-size:12px;transform:scaleX(0.882);transform-origin:0 50%;color:#137333">-32%</div>
<div class="a" style="left:801.5px;top:214.8px;font-weight:500;font-size:12px;letter-spacing:-0.25px;color:#137333">排放量</div>
<div class="a" style="left:117.8px;top:265.0px;font-size:14px;-webkit-text-stroke:.35px #202124;transform:scaleX(0.975);transform-origin:0 50%;color:#202124">8</div>
<div class="a" style="left:128.0px;top:264.3px;font-weight:500;font-size:15.4px;color:#202124">月</div>
<div class="a" style="left:142.5px;top:264.5px;font-size:14px;-webkit-text-stroke:.35px #202124;transform:scaleX(0.863);transform-origin:0 50%;color:#202124">21</div>
<div class="a" style="left:156.7px;top:264.3px;font-weight:500;font-size:15.4px;letter-spacing:1.3px;color:#202124">日周四</div>
<div class="a" style="left:211.1px;top:264.2px;font-size:14px;-webkit-text-stroke:.35px #202124;color:#202124">·</div>
<div class="a" style="left:222.0px;top:265.0px;font-size:14px;-webkit-text-stroke:.35px #202124;transform:scaleX(1.091);transform-origin:0 50%;color:#202124">16:50</div>
<div class="a" style="left:266.1px;top:264.0px;font-size:14px;-webkit-text-stroke:.35px #202124;transform:scaleX(0.844);transform-origin:0 50%;color:#202124">–</div>
<div class="a" style="left:278.0px;top:265.0px;font-size:14px;-webkit-text-stroke:.35px #202124;transform:scaleX(1.058);transform-origin:0 50%;color:#202124">11:50</div>
<div class="a" style="left:118.0px;top:288.2px;font-size:12px;letter-spacing:-0.06px;color:#70757a">美联航 · 韩亚</div>
<div class="a" style="left:404.6px;top:265.0px;font-size:14px;transform:scaleX(0.800);transform-origin:0 50%;color:#202124">11</div>
<div class="a" style="left:420.4px;top:264.8px;font-size:15.4px;letter-spacing:1.0px;color:#202124">小时</div>
<div class="a" style="left:404.6px;top:287.4px;font-size:11.5px;transform:scaleX(1.000);transform-origin:0 50%;color:#70757a">ICN–SFO</div>
<div class="a" style="left:583.8px;top:265.3px;font-size:15.4px;letter-spacing:0.6px;color:#202124">直达</div>
<div class="a" style="left:771.7px;top:265.0px;font-size:14px;transform:scaleX(1.052);transform-origin:0 50%;color:#202124">349</div>
<div class="a" style="left:801.5px;top:264.8px;font-size:15.4px;letter-spacing:0.43px;color:#202124">千克二氧化碳当量</div>
<div class="a" style="left:772.0px;top:287.0px;font-size:12px;transform:scaleX(0.882);transform-origin:0 50%;color:#137333">-42%</div>
<div class="a" style="left:801.5px;top:287.4px;font-weight:500;font-size:12px;letter-spacing:-0.25px;color:#137333">排放量</div>
<div class="a" style="left:27.8px;top:345.3px;font-size:19.5px;letter-spacing:-0.4px;color:#202124">预订选项</div>
<div class="a" style="left:27.8px;top:368.6px;font-size:12px;letter-spacing:-0.13px;color:#5f6368">选项的排名方式</div>
<div class="a" style="left:109.3px;top:418.6px;font-size:16px;color:#202124">通过</div>
<div class="a" style="left:139.6px;top:417.8px;font-size:15.5px;transform:scaleX(1.012);transform-origin:0 50%;color:#202124">United</div>
<div class="a" style="left:185.8px;top:418.1px;font-size:16px;letter-spacing:-0.5px;color:#202124">预订</div>
<div class="a" style="left:231.5px;top:421.6px;font-size:12px;letter-spacing:0.27px;color:#5f6368">航空公司</div>
<div class="a" style="left:922.0px;top:423.0px;font-size:14px;letter-spacing:-0.07px;color:#1a73e8">隐藏选项</div>
<div class="a" style="left:124.5px;top:473.3px;font-size:15.5px;letter-spacing:-0.35px;color:#202124">基础经济舱</div>
<div class="a" style="left:329.2px;top:474.3px;font-size:14.4px;-webkit-text-stroke:.35px #202124;transform:scaleX(1.002);transform-origin:0 50%;color:#202124">US$661</div>
<div class="a" style="left:157.0px;top:513.5px;font-size:13.7px;letter-spacing:-0.1px;color:#5f6368">选座需付费</div>
<div class="a" style="left:156.0px;top:543.6px;font-size:13.7px;letter-spacing:0.15px;color:#5f6368">改签需付费</div>
<div class="a" style="left:156.0px;top:574.0px;font-size:13.7px;letter-spacing:0.2px;color:#5f6368">不可升舱</div>
<div class="a" style="left:156.0px;top:604.2px;font-size:13.7px;letter-spacing:0.12px;color:#5f6368">不支持退款</div>
<div class="a" style="left:159.2px;top:646.6px;font-size:13.7px;letter-spacing:-0.09px;color:#5f6368">1 件免费随身行李</div>
<div class="a" style="left:159.6px;top:677.0px;font-size:13.7px;letter-spacing:-0.37px;color:#5f6368">首件托运行李免费</div>
<div class="a" style="left:239.8px;top:727.8px;font-size:14px;letter-spacing:-0.2px;color:#fff">继续</div>
<div class="a" style="left:422.2px;top:473.3px;font-size:15.5px;letter-spacing:-0.5px;color:#202124">经济舱</div>
<div class="a" style="left:626.6px;top:474.3px;font-size:14.4px;-webkit-text-stroke:.35px #202124;transform:scaleX(1.008);transform-origin:0 50%;color:#202124">US$861</div>
<div class="a" style="left:453.7px;top:513.5px;font-size:13.7px;letter-spacing:0.23px;color:#5f6368">免费选座</div>
<div class="a" style="left:453.7px;top:543.6px;font-size:13.7px;letter-spacing:-0.14px;color:#5f6368">免费改签，但机票价格可能有差异</div>
<div class="a" style="left:454.7px;top:574.0px;font-size:13.7px;letter-spacing:-0.1px;color:#5f6368">可升舱</div>
<div class="a" style="left:453.7px;top:604.2px;font-size:13.7px;letter-spacing:0.12px;color:#5f6368">不支持退款</div>
<div class="a" style="left:456.9px;top:646.6px;font-size:13.7px;letter-spacing:-0.09px;color:#5f6368">1 件免费随身行李</div>
<div class="a" style="left:456.3px;top:677.0px;font-size:13.7px;letter-spacing:0.11px;color:#5f6368">免费托运 2 件行李</div>
<div class="a" style="left:537.5px;top:727.8px;font-size:14px;letter-spacing:-0.2px;color:#1a73e8">继续</div>
<div class="a" style="left:719.9px;top:473.3px;font-size:15.5px;letter-spacing:-0.35px;color:#202124">舒适经济舱</div>
<div class="a" style="left:914.0px;top:474.3px;font-size:14.4px;-webkit-text-stroke:.35px #202124;transform:scaleX(0.979);transform-origin:0 50%;color:#202124">US$1,271</div>
<div class="a" style="left:751.4px;top:513.5px;font-size:13.7px;letter-spacing:0.23px;color:#5f6368">免费选座</div>
<div class="a" style="left:751.4px;top:543.6px;font-size:13.7px;letter-spacing:-0.14px;color:#5f6368">免费改签，但机票价格可能有差异</div>
<div class="a" style="left:752.4px;top:574.0px;font-size:13.7px;letter-spacing:-0.1px;color:#5f6368">可升舱</div>
<div class="a" style="left:751.4px;top:604.2px;font-size:13.7px;letter-spacing:0.12px;color:#5f6368">不支持退款</div>
<div class="a" style="left:754.6px;top:646.6px;font-size:13.7px;letter-spacing:-0.09px;color:#5f6368">1 件免费随身行李</div>
<div class="a" style="left:754.0px;top:677.0px;font-size:13.7px;letter-spacing:0.11px;color:#5f6368">免费托运 2 件行李</div>
<div class="a" style="left:835.2px;top:727.8px;font-size:14px;letter-spacing:-0.2px;color:#1a73e8">继续</div>
</body>
</html>
